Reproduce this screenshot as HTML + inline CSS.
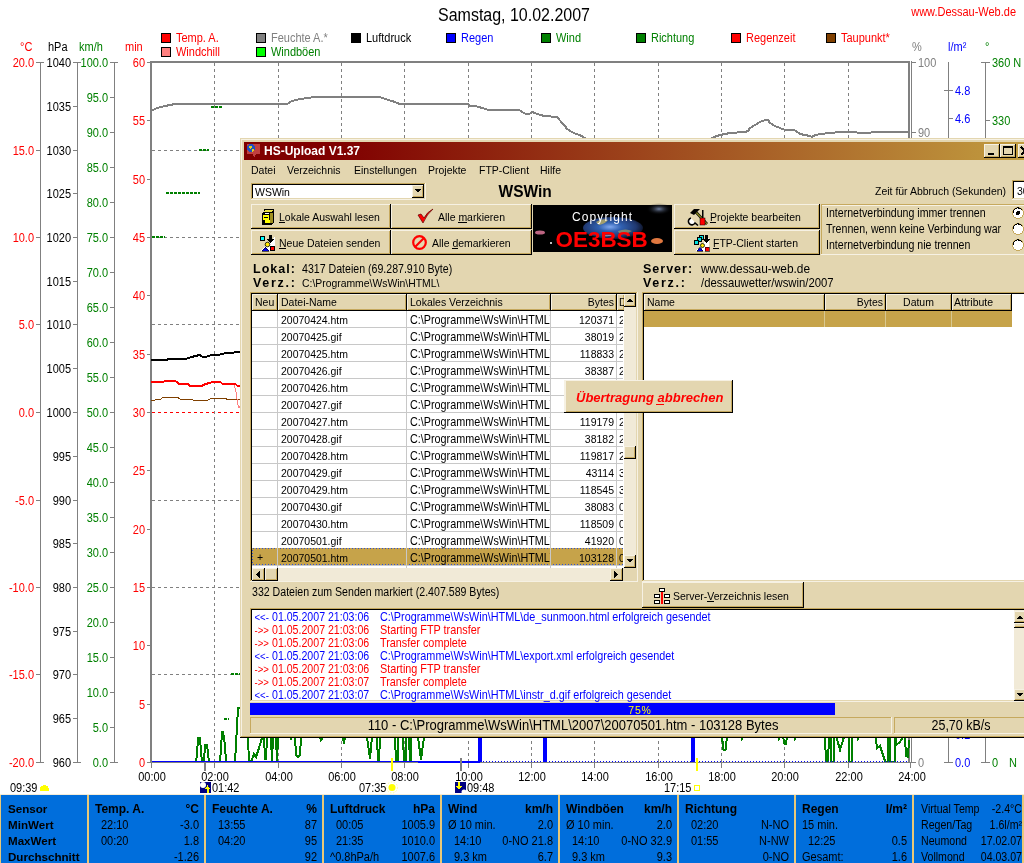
<!DOCTYPE html>
<html><head><meta charset="utf-8"><title>WsWin HS-Upload</title>
<style>html,body{margin:0;padding:0;background:#fff;overflow:hidden;width:1024px;height:863px}svg{display:block;will-change:transform}text{font-family:"Liberation Sans",sans-serif}</style>
</head><body>
<svg width="1024" height="863" viewBox="0 0 1024 863" font-family="Liberation Sans, sans-serif" shape-rendering="crispEdges">
<rect x="0" y="0" width="1024" height="863" fill="#FFFFFF"/>
<g><text transform="translate(514,21) scale(0.8929,1)" x="0" y="0" fill="#000" text-anchor="middle" font-size="17.92" font-weight="normal" >Samstag, 10.02.2007</text>
<text transform="translate(1016,16) scale(0.8929,1)" x="0" y="0" fill="#FF0000" text-anchor="end" font-size="12.32" font-weight="normal" >www.Dessau-Web.de</text>
<rect x="161.5" y="33.5" width="9" height="9" fill="#FF0000" stroke="#000" stroke-width="1"/>
<text transform="translate(176,42) scale(0.8929,1)" x="0" y="0" fill="#FF0000" text-anchor="start" font-size="12.32" font-weight="normal" >Temp. A.</text>
<rect x="256.5" y="33.5" width="9" height="9" fill="#808080" stroke="#000" stroke-width="1"/>
<text transform="translate(271,42) scale(0.8929,1)" x="0" y="0" fill="#808080" text-anchor="start" font-size="12.32" font-weight="normal" >Feuchte A.*</text>
<rect x="351.5" y="33.5" width="9" height="9" fill="#000000" stroke="#000" stroke-width="1"/>
<text transform="translate(366,42) scale(0.8929,1)" x="0" y="0" fill="#000000" text-anchor="start" font-size="12.32" font-weight="normal" >Luftdruck</text>
<rect x="446.5" y="33.5" width="9" height="9" fill="#0000FF" stroke="#000" stroke-width="1"/>
<text transform="translate(461,42) scale(0.8929,1)" x="0" y="0" fill="#0000FF" text-anchor="start" font-size="12.32" font-weight="normal" >Regen</text>
<rect x="541.5" y="33.5" width="9" height="9" fill="#008000" stroke="#000" stroke-width="1"/>
<text transform="translate(556,42) scale(0.8929,1)" x="0" y="0" fill="#008000" text-anchor="start" font-size="12.32" font-weight="normal" >Wind</text>
<rect x="636.5" y="33.5" width="9" height="9" fill="#008000" stroke="#000" stroke-width="1"/>
<text transform="translate(651,42) scale(0.8929,1)" x="0" y="0" fill="#008000" text-anchor="start" font-size="12.32" font-weight="normal" >Richtung</text>
<rect x="731.5" y="33.5" width="9" height="9" fill="#FF0000" stroke="#000" stroke-width="1"/>
<text transform="translate(746,42) scale(0.8929,1)" x="0" y="0" fill="#FF0000" text-anchor="start" font-size="12.32" font-weight="normal" >Regenzeit</text>
<rect x="826.5" y="33.5" width="9" height="9" fill="#804000" stroke="#000" stroke-width="1"/>
<text transform="translate(841,42) scale(0.8929,1)" x="0" y="0" fill="#FF0000" text-anchor="start" font-size="12.32" font-weight="normal" >Taupunkt*</text>
<rect x="161.5" y="47.5" width="9" height="9" fill="#FF8080" stroke="#000" stroke-width="1"/>
<text transform="translate(176,56) scale(0.8929,1)" x="0" y="0" fill="#FF0000" text-anchor="start" font-size="12.32" font-weight="normal" >Windchill</text>
<rect x="256.5" y="47.5" width="9" height="9" fill="#00FF00" stroke="#000" stroke-width="1"/>
<text transform="translate(271,56) scale(0.8929,1)" x="0" y="0" fill="#008000" text-anchor="start" font-size="12.32" font-weight="normal" >Windböen</text>
<text transform="translate(20,51) scale(0.8929,1)" x="0" y="0" fill="#FF0000" text-anchor="start" font-size="12.32" font-weight="normal" >°C</text>
<text transform="translate(48,51) scale(0.8929,1)" x="0" y="0" fill="#000" text-anchor="start" font-size="12.32" font-weight="normal" >hPa</text>
<text transform="translate(79,51) scale(0.8929,1)" x="0" y="0" fill="#008000" text-anchor="start" font-size="12.32" font-weight="normal" >km/h</text>
<text transform="translate(125,51) scale(0.8929,1)" x="0" y="0" fill="#FF0000" text-anchor="start" font-size="12.32" font-weight="normal" >min</text>
<text transform="translate(912,51) scale(0.8929,1)" x="0" y="0" fill="#808080" text-anchor="start" font-size="12.32" font-weight="normal" >%</text>
<text transform="translate(948,51) scale(0.8929,1)" x="0" y="0" fill="#0000FF" text-anchor="start" font-size="12.32" font-weight="normal" >l/m²</text>
<text transform="translate(985,51) scale(0.8929,1)" x="0" y="0" fill="#008000" text-anchor="start" font-size="12.32" font-weight="normal" >°</text>
<line x1="40.5" y1="62" x2="40.5" y2="763" stroke="#808080" stroke-width="1" />
<line x1="36" y1="62.5" x2="44" y2="62.5" stroke="#808080" stroke-width="1" />
<text transform="translate(34,67) scale(0.8929,1)" x="0" y="0" fill="#FF0000" text-anchor="end" font-size="12.32" font-weight="normal" >20.0</text>
<line x1="36" y1="150.5" x2="41" y2="150.5" stroke="#808080" stroke-width="1" />
<text transform="translate(34,155) scale(0.8929,1)" x="0" y="0" fill="#FF0000" text-anchor="end" font-size="12.32" font-weight="normal" >15.0</text>
<line x1="36" y1="237.5" x2="41" y2="237.5" stroke="#808080" stroke-width="1" />
<text transform="translate(34,242) scale(0.8929,1)" x="0" y="0" fill="#FF0000" text-anchor="end" font-size="12.32" font-weight="normal" >10.0</text>
<line x1="36" y1="324.5" x2="41" y2="324.5" stroke="#808080" stroke-width="1" />
<text transform="translate(34,329) scale(0.8929,1)" x="0" y="0" fill="#FF0000" text-anchor="end" font-size="12.32" font-weight="normal" >5.0</text>
<line x1="36" y1="412.5" x2="41" y2="412.5" stroke="#808080" stroke-width="1" />
<text transform="translate(34,417) scale(0.8929,1)" x="0" y="0" fill="#FF0000" text-anchor="end" font-size="12.32" font-weight="normal" >0.0</text>
<line x1="36" y1="500.5" x2="41" y2="500.5" stroke="#808080" stroke-width="1" />
<text transform="translate(34,505) scale(0.8929,1)" x="0" y="0" fill="#FF0000" text-anchor="end" font-size="12.32" font-weight="normal" >-5.0</text>
<line x1="36" y1="587.5" x2="41" y2="587.5" stroke="#808080" stroke-width="1" />
<text transform="translate(34,592) scale(0.8929,1)" x="0" y="0" fill="#FF0000" text-anchor="end" font-size="12.32" font-weight="normal" >-10.0</text>
<line x1="36" y1="674.5" x2="41" y2="674.5" stroke="#808080" stroke-width="1" />
<text transform="translate(34,679) scale(0.8929,1)" x="0" y="0" fill="#FF0000" text-anchor="end" font-size="12.32" font-weight="normal" >-15.0</text>
<line x1="36" y1="762.5" x2="44" y2="762.5" stroke="#808080" stroke-width="1" />
<text transform="translate(34,767) scale(0.8929,1)" x="0" y="0" fill="#FF0000" text-anchor="end" font-size="12.32" font-weight="normal" >-20.0</text>
<line x1="77.5" y1="62" x2="77.5" y2="763" stroke="#808080" stroke-width="1" />
<line x1="73" y1="62.5" x2="81" y2="62.5" stroke="#808080" stroke-width="1" />
<text transform="translate(71,67) scale(0.8929,1)" x="0" y="0" fill="#000000" text-anchor="end" font-size="12.32" font-weight="normal" >1040</text>
<line x1="73" y1="106.5" x2="78" y2="106.5" stroke="#808080" stroke-width="1" />
<text transform="translate(71,111) scale(0.8929,1)" x="0" y="0" fill="#000000" text-anchor="end" font-size="12.32" font-weight="normal" >1035</text>
<line x1="73" y1="150.5" x2="78" y2="150.5" stroke="#808080" stroke-width="1" />
<text transform="translate(71,155) scale(0.8929,1)" x="0" y="0" fill="#000000" text-anchor="end" font-size="12.32" font-weight="normal" >1030</text>
<line x1="73" y1="193.5" x2="78" y2="193.5" stroke="#808080" stroke-width="1" />
<text transform="translate(71,198) scale(0.8929,1)" x="0" y="0" fill="#000000" text-anchor="end" font-size="12.32" font-weight="normal" >1025</text>
<line x1="73" y1="237.5" x2="78" y2="237.5" stroke="#808080" stroke-width="1" />
<text transform="translate(71,242) scale(0.8929,1)" x="0" y="0" fill="#000000" text-anchor="end" font-size="12.32" font-weight="normal" >1020</text>
<line x1="73" y1="281.5" x2="78" y2="281.5" stroke="#808080" stroke-width="1" />
<text transform="translate(71,286) scale(0.8929,1)" x="0" y="0" fill="#000000" text-anchor="end" font-size="12.32" font-weight="normal" >1015</text>
<line x1="73" y1="324.5" x2="78" y2="324.5" stroke="#808080" stroke-width="1" />
<text transform="translate(71,329) scale(0.8929,1)" x="0" y="0" fill="#000000" text-anchor="end" font-size="12.32" font-weight="normal" >1010</text>
<line x1="73" y1="368.5" x2="78" y2="368.5" stroke="#808080" stroke-width="1" />
<text transform="translate(71,373) scale(0.8929,1)" x="0" y="0" fill="#000000" text-anchor="end" font-size="12.32" font-weight="normal" >1005</text>
<line x1="73" y1="412.5" x2="78" y2="412.5" stroke="#808080" stroke-width="1" />
<text transform="translate(71,417) scale(0.8929,1)" x="0" y="0" fill="#000000" text-anchor="end" font-size="12.32" font-weight="normal" >1000</text>
<line x1="73" y1="456.5" x2="78" y2="456.5" stroke="#808080" stroke-width="1" />
<text transform="translate(71,461) scale(0.8929,1)" x="0" y="0" fill="#000000" text-anchor="end" font-size="12.32" font-weight="normal" >995</text>
<line x1="73" y1="500.5" x2="78" y2="500.5" stroke="#808080" stroke-width="1" />
<text transform="translate(71,505) scale(0.8929,1)" x="0" y="0" fill="#000000" text-anchor="end" font-size="12.32" font-weight="normal" >990</text>
<line x1="73" y1="543.5" x2="78" y2="543.5" stroke="#808080" stroke-width="1" />
<text transform="translate(71,548) scale(0.8929,1)" x="0" y="0" fill="#000000" text-anchor="end" font-size="12.32" font-weight="normal" >985</text>
<line x1="73" y1="587.5" x2="78" y2="587.5" stroke="#808080" stroke-width="1" />
<text transform="translate(71,592) scale(0.8929,1)" x="0" y="0" fill="#000000" text-anchor="end" font-size="12.32" font-weight="normal" >980</text>
<line x1="73" y1="631.5" x2="78" y2="631.5" stroke="#808080" stroke-width="1" />
<text transform="translate(71,636) scale(0.8929,1)" x="0" y="0" fill="#000000" text-anchor="end" font-size="12.32" font-weight="normal" >975</text>
<line x1="73" y1="674.5" x2="78" y2="674.5" stroke="#808080" stroke-width="1" />
<text transform="translate(71,679) scale(0.8929,1)" x="0" y="0" fill="#000000" text-anchor="end" font-size="12.32" font-weight="normal" >970</text>
<line x1="73" y1="718.5" x2="78" y2="718.5" stroke="#808080" stroke-width="1" />
<text transform="translate(71,723) scale(0.8929,1)" x="0" y="0" fill="#000000" text-anchor="end" font-size="12.32" font-weight="normal" >965</text>
<line x1="73" y1="762.5" x2="81" y2="762.5" stroke="#808080" stroke-width="1" />
<text transform="translate(71,767) scale(0.8929,1)" x="0" y="0" fill="#000000" text-anchor="end" font-size="12.32" font-weight="normal" >960</text>
<line x1="114.5" y1="62" x2="114.5" y2="763" stroke="#808080" stroke-width="1" />
<line x1="110" y1="62.5" x2="118" y2="62.5" stroke="#808080" stroke-width="1" />
<text transform="translate(108,67) scale(0.8929,1)" x="0" y="0" fill="#008000" text-anchor="end" font-size="12.32" font-weight="normal" >100.0</text>
<line x1="110" y1="97.5" x2="115" y2="97.5" stroke="#808080" stroke-width="1" />
<text transform="translate(108,102) scale(0.8929,1)" x="0" y="0" fill="#008000" text-anchor="end" font-size="12.32" font-weight="normal" >95.0</text>
<line x1="110" y1="132.5" x2="115" y2="132.5" stroke="#808080" stroke-width="1" />
<text transform="translate(108,137) scale(0.8929,1)" x="0" y="0" fill="#008000" text-anchor="end" font-size="12.32" font-weight="normal" >90.0</text>
<line x1="110" y1="167.5" x2="115" y2="167.5" stroke="#808080" stroke-width="1" />
<text transform="translate(108,172) scale(0.8929,1)" x="0" y="0" fill="#008000" text-anchor="end" font-size="12.32" font-weight="normal" >85.0</text>
<line x1="110" y1="202.5" x2="115" y2="202.5" stroke="#808080" stroke-width="1" />
<text transform="translate(108,207) scale(0.8929,1)" x="0" y="0" fill="#008000" text-anchor="end" font-size="12.32" font-weight="normal" >80.0</text>
<line x1="110" y1="237.5" x2="115" y2="237.5" stroke="#808080" stroke-width="1" />
<text transform="translate(108,242) scale(0.8929,1)" x="0" y="0" fill="#008000" text-anchor="end" font-size="12.32" font-weight="normal" >75.0</text>
<line x1="110" y1="272.5" x2="115" y2="272.5" stroke="#808080" stroke-width="1" />
<text transform="translate(108,277) scale(0.8929,1)" x="0" y="0" fill="#008000" text-anchor="end" font-size="12.32" font-weight="normal" >70.0</text>
<line x1="110" y1="307.5" x2="115" y2="307.5" stroke="#808080" stroke-width="1" />
<text transform="translate(108,312) scale(0.8929,1)" x="0" y="0" fill="#008000" text-anchor="end" font-size="12.32" font-weight="normal" >65.0</text>
<line x1="110" y1="342.5" x2="115" y2="342.5" stroke="#808080" stroke-width="1" />
<text transform="translate(108,347) scale(0.8929,1)" x="0" y="0" fill="#008000" text-anchor="end" font-size="12.32" font-weight="normal" >60.0</text>
<line x1="110" y1="377.5" x2="115" y2="377.5" stroke="#808080" stroke-width="1" />
<text transform="translate(108,382) scale(0.8929,1)" x="0" y="0" fill="#008000" text-anchor="end" font-size="12.32" font-weight="normal" >55.0</text>
<line x1="110" y1="412.5" x2="115" y2="412.5" stroke="#808080" stroke-width="1" />
<text transform="translate(108,417) scale(0.8929,1)" x="0" y="0" fill="#008000" text-anchor="end" font-size="12.32" font-weight="normal" >50.0</text>
<line x1="110" y1="447.5" x2="115" y2="447.5" stroke="#808080" stroke-width="1" />
<text transform="translate(108,452) scale(0.8929,1)" x="0" y="0" fill="#008000" text-anchor="end" font-size="12.32" font-weight="normal" >45.0</text>
<line x1="110" y1="482.5" x2="115" y2="482.5" stroke="#808080" stroke-width="1" />
<text transform="translate(108,487) scale(0.8929,1)" x="0" y="0" fill="#008000" text-anchor="end" font-size="12.32" font-weight="normal" >40.0</text>
<line x1="110" y1="517.5" x2="115" y2="517.5" stroke="#808080" stroke-width="1" />
<text transform="translate(108,522) scale(0.8929,1)" x="0" y="0" fill="#008000" text-anchor="end" font-size="12.32" font-weight="normal" >35.0</text>
<line x1="110" y1="552.5" x2="115" y2="552.5" stroke="#808080" stroke-width="1" />
<text transform="translate(108,557) scale(0.8929,1)" x="0" y="0" fill="#008000" text-anchor="end" font-size="12.32" font-weight="normal" >30.0</text>
<line x1="110" y1="587.5" x2="115" y2="587.5" stroke="#808080" stroke-width="1" />
<text transform="translate(108,592) scale(0.8929,1)" x="0" y="0" fill="#008000" text-anchor="end" font-size="12.32" font-weight="normal" >25.0</text>
<line x1="110" y1="622.5" x2="115" y2="622.5" stroke="#808080" stroke-width="1" />
<text transform="translate(108,627) scale(0.8929,1)" x="0" y="0" fill="#008000" text-anchor="end" font-size="12.32" font-weight="normal" >20.0</text>
<line x1="110" y1="657.5" x2="115" y2="657.5" stroke="#808080" stroke-width="1" />
<text transform="translate(108,662) scale(0.8929,1)" x="0" y="0" fill="#008000" text-anchor="end" font-size="12.32" font-weight="normal" >15.0</text>
<line x1="110" y1="692.5" x2="115" y2="692.5" stroke="#808080" stroke-width="1" />
<text transform="translate(108,697) scale(0.8929,1)" x="0" y="0" fill="#008000" text-anchor="end" font-size="12.32" font-weight="normal" >10.0</text>
<line x1="110" y1="727.5" x2="115" y2="727.5" stroke="#808080" stroke-width="1" />
<text transform="translate(108,732) scale(0.8929,1)" x="0" y="0" fill="#008000" text-anchor="end" font-size="12.32" font-weight="normal" >5.0</text>
<line x1="110" y1="762.5" x2="118" y2="762.5" stroke="#808080" stroke-width="1" />
<text transform="translate(108,767) scale(0.8929,1)" x="0" y="0" fill="#008000" text-anchor="end" font-size="12.32" font-weight="normal" >0.0</text>
<line x1="147" y1="62.5" x2="151" y2="62.5" stroke="#808080" stroke-width="1" />
<text transform="translate(145,67) scale(0.8929,1)" x="0" y="0" fill="#FF0000" text-anchor="end" font-size="12.32" font-weight="normal" >60</text>
<line x1="147" y1="120.5" x2="151" y2="120.5" stroke="#808080" stroke-width="1" />
<text transform="translate(145,125) scale(0.8929,1)" x="0" y="0" fill="#FF0000" text-anchor="end" font-size="12.32" font-weight="normal" >55</text>
<line x1="147" y1="179.5" x2="151" y2="179.5" stroke="#808080" stroke-width="1" />
<text transform="translate(145,184) scale(0.8929,1)" x="0" y="0" fill="#FF0000" text-anchor="end" font-size="12.32" font-weight="normal" >50</text>
<line x1="147" y1="237.5" x2="151" y2="237.5" stroke="#808080" stroke-width="1" />
<text transform="translate(145,242) scale(0.8929,1)" x="0" y="0" fill="#FF0000" text-anchor="end" font-size="12.32" font-weight="normal" >45</text>
<line x1="147" y1="295.5" x2="151" y2="295.5" stroke="#808080" stroke-width="1" />
<text transform="translate(145,300) scale(0.8929,1)" x="0" y="0" fill="#FF0000" text-anchor="end" font-size="12.32" font-weight="normal" >40</text>
<line x1="147" y1="354.5" x2="151" y2="354.5" stroke="#808080" stroke-width="1" />
<text transform="translate(145,359) scale(0.8929,1)" x="0" y="0" fill="#FF0000" text-anchor="end" font-size="12.32" font-weight="normal" >35</text>
<line x1="147" y1="412.5" x2="151" y2="412.5" stroke="#808080" stroke-width="1" />
<text transform="translate(145,417) scale(0.8929,1)" x="0" y="0" fill="#FF0000" text-anchor="end" font-size="12.32" font-weight="normal" >30</text>
<line x1="147" y1="470.5" x2="151" y2="470.5" stroke="#808080" stroke-width="1" />
<text transform="translate(145,475) scale(0.8929,1)" x="0" y="0" fill="#FF0000" text-anchor="end" font-size="12.32" font-weight="normal" >25</text>
<line x1="147" y1="529.5" x2="151" y2="529.5" stroke="#808080" stroke-width="1" />
<text transform="translate(145,534) scale(0.8929,1)" x="0" y="0" fill="#FF0000" text-anchor="end" font-size="12.32" font-weight="normal" >20</text>
<line x1="147" y1="587.5" x2="151" y2="587.5" stroke="#808080" stroke-width="1" />
<text transform="translate(145,592) scale(0.8929,1)" x="0" y="0" fill="#FF0000" text-anchor="end" font-size="12.32" font-weight="normal" >15</text>
<line x1="147" y1="645.5" x2="151" y2="645.5" stroke="#808080" stroke-width="1" />
<text transform="translate(145,650) scale(0.8929,1)" x="0" y="0" fill="#FF0000" text-anchor="end" font-size="12.32" font-weight="normal" >10</text>
<line x1="147" y1="704.5" x2="151" y2="704.5" stroke="#808080" stroke-width="1" />
<text transform="translate(145,709) scale(0.8929,1)" x="0" y="0" fill="#FF0000" text-anchor="end" font-size="12.32" font-weight="normal" >5</text>
<line x1="147" y1="762.5" x2="151" y2="762.5" stroke="#808080" stroke-width="1" />
<text transform="translate(145,767) scale(0.8929,1)" x="0" y="0" fill="#FF0000" text-anchor="end" font-size="12.32" font-weight="normal" >0</text>
<line x1="152" y1="150.5" x2="909" y2="150.5" stroke="#808080" stroke-width="1" stroke-dasharray="3,3"/>
<line x1="152" y1="237.5" x2="909" y2="237.5" stroke="#808080" stroke-width="1" stroke-dasharray="3,3"/>
<line x1="152" y1="324.5" x2="909" y2="324.5" stroke="#808080" stroke-width="1" stroke-dasharray="3,3"/>
<line x1="152" y1="412.5" x2="909" y2="412.5" stroke="#FF0000" stroke-width="1" stroke-dasharray="3,3"/>
<line x1="152" y1="500.5" x2="909" y2="500.5" stroke="#808080" stroke-width="1" stroke-dasharray="3,3"/>
<line x1="152" y1="587.5" x2="909" y2="587.5" stroke="#808080" stroke-width="1" stroke-dasharray="3,3"/>
<line x1="152" y1="674.5" x2="909" y2="674.5" stroke="#808080" stroke-width="1" stroke-dasharray="3,3"/>
<line x1="214.5" y1="63" x2="214.5" y2="762" stroke="#808080" stroke-width="1" stroke-dasharray="3,3"/>
<line x1="214.5" y1="762" x2="214.5" y2="768" stroke="#808080" stroke-width="1" />
<line x1="278.5" y1="63" x2="278.5" y2="762" stroke="#808080" stroke-width="1" stroke-dasharray="3,3"/>
<line x1="278.5" y1="762" x2="278.5" y2="768" stroke="#808080" stroke-width="1" />
<line x1="341.5" y1="63" x2="341.5" y2="762" stroke="#808080" stroke-width="1" stroke-dasharray="3,3"/>
<line x1="341.5" y1="762" x2="341.5" y2="768" stroke="#808080" stroke-width="1" />
<line x1="404.5" y1="63" x2="404.5" y2="762" stroke="#808080" stroke-width="1" stroke-dasharray="3,3"/>
<line x1="404.5" y1="762" x2="404.5" y2="768" stroke="#808080" stroke-width="1" />
<line x1="468.5" y1="63" x2="468.5" y2="762" stroke="#808080" stroke-width="1" stroke-dasharray="3,3"/>
<line x1="468.5" y1="762" x2="468.5" y2="768" stroke="#808080" stroke-width="1" />
<line x1="531.5" y1="63" x2="531.5" y2="762" stroke="#808080" stroke-width="1" stroke-dasharray="3,3"/>
<line x1="531.5" y1="762" x2="531.5" y2="768" stroke="#808080" stroke-width="1" />
<line x1="594.5" y1="63" x2="594.5" y2="762" stroke="#808080" stroke-width="1" stroke-dasharray="3,3"/>
<line x1="594.5" y1="762" x2="594.5" y2="768" stroke="#808080" stroke-width="1" />
<line x1="658.5" y1="63" x2="658.5" y2="762" stroke="#808080" stroke-width="1" stroke-dasharray="3,3"/>
<line x1="658.5" y1="762" x2="658.5" y2="768" stroke="#808080" stroke-width="1" />
<line x1="721.5" y1="63" x2="721.5" y2="762" stroke="#808080" stroke-width="1" stroke-dasharray="3,3"/>
<line x1="721.5" y1="762" x2="721.5" y2="768" stroke="#808080" stroke-width="1" />
<line x1="784.5" y1="63" x2="784.5" y2="762" stroke="#808080" stroke-width="1" stroke-dasharray="3,3"/>
<line x1="784.5" y1="762" x2="784.5" y2="768" stroke="#808080" stroke-width="1" />
<line x1="848.5" y1="63" x2="848.5" y2="762" stroke="#808080" stroke-width="1" stroke-dasharray="3,3"/>
<line x1="848.5" y1="762" x2="848.5" y2="768" stroke="#808080" stroke-width="1" />
<line x1="151.5" y1="762" x2="151.5" y2="768" stroke="#808080" stroke-width="1" />
<line x1="910.5" y1="762" x2="910.5" y2="768" stroke="#808080" stroke-width="1" />
<rect x="150" y="61" width="2" height="702" fill="#808080"/>
<rect x="150" y="61" width="760" height="2" fill="#808080"/>
<rect x="908" y="61" width="2" height="702" fill="#808080"/>
<rect x="911" y="61" width="1" height="702" fill="#808080"/>
<text transform="translate(152,781) scale(0.8929,1)" x="0" y="0" fill="#000" text-anchor="middle" font-size="12.32" font-weight="normal" >00:00</text>
<text transform="translate(215,781) scale(0.8929,1)" x="0" y="0" fill="#000" text-anchor="middle" font-size="12.32" font-weight="normal" >02:00</text>
<text transform="translate(279,781) scale(0.8929,1)" x="0" y="0" fill="#000" text-anchor="middle" font-size="12.32" font-weight="normal" >04:00</text>
<text transform="translate(342,781) scale(0.8929,1)" x="0" y="0" fill="#000" text-anchor="middle" font-size="12.32" font-weight="normal" >06:00</text>
<text transform="translate(405,781) scale(0.8929,1)" x="0" y="0" fill="#000" text-anchor="middle" font-size="12.32" font-weight="normal" >08:00</text>
<text transform="translate(469,781) scale(0.8929,1)" x="0" y="0" fill="#000" text-anchor="middle" font-size="12.32" font-weight="normal" >10:00</text>
<text transform="translate(532,781) scale(0.8929,1)" x="0" y="0" fill="#000" text-anchor="middle" font-size="12.32" font-weight="normal" >12:00</text>
<text transform="translate(595,781) scale(0.8929,1)" x="0" y="0" fill="#000" text-anchor="middle" font-size="12.32" font-weight="normal" >14:00</text>
<text transform="translate(659,781) scale(0.8929,1)" x="0" y="0" fill="#000" text-anchor="middle" font-size="12.32" font-weight="normal" >16:00</text>
<text transform="translate(722,781) scale(0.8929,1)" x="0" y="0" fill="#000" text-anchor="middle" font-size="12.32" font-weight="normal" >18:00</text>
<text transform="translate(785,781) scale(0.8929,1)" x="0" y="0" fill="#000" text-anchor="middle" font-size="12.32" font-weight="normal" >20:00</text>
<text transform="translate(849,781) scale(0.8929,1)" x="0" y="0" fill="#000" text-anchor="middle" font-size="12.32" font-weight="normal" >22:00</text>
<text transform="translate(912,781) scale(0.8929,1)" x="0" y="0" fill="#000" text-anchor="middle" font-size="12.32" font-weight="normal" >24:00</text>
<line x1="912" y1="62.5" x2="916" y2="62.5" stroke="#808080" stroke-width="1" />
<text transform="translate(918,67) scale(0.8929,1)" x="0" y="0" fill="#808080" text-anchor="start" font-size="12.32" font-weight="normal" >100</text>
<line x1="912" y1="132.5" x2="916" y2="132.5" stroke="#808080" stroke-width="1" />
<text transform="translate(918,137) scale(0.8929,1)" x="0" y="0" fill="#808080" text-anchor="start" font-size="12.32" font-weight="normal" >90</text>
<line x1="912" y1="762.5" x2="916" y2="762.5" stroke="#808080" stroke-width="1" />
<text transform="translate(918,767) scale(0.8929,1)" x="0" y="0" fill="#808080" text-anchor="start" font-size="12.32" font-weight="normal" >0</text>
<line x1="948.5" y1="62" x2="948.5" y2="762" stroke="#808080" stroke-width="1" />
<line x1="944" y1="90.5" x2="953" y2="90.5" stroke="#808080" stroke-width="1" />
<text transform="translate(955,95) scale(0.8929,1)" x="0" y="0" fill="#0000FF" text-anchor="start" font-size="12.32" font-weight="normal" >4.8</text>
<line x1="948" y1="118.5" x2="953" y2="118.5" stroke="#808080" stroke-width="1" />
<text transform="translate(955,123) scale(0.8929,1)" x="0" y="0" fill="#0000FF" text-anchor="start" font-size="12.32" font-weight="normal" >4.6</text>
<line x1="944" y1="734.5" x2="953" y2="734.5" stroke="#808080" stroke-width="1" />
<text transform="translate(955,739) scale(0.8929,1)" x="0" y="0" fill="#0000FF" text-anchor="start" font-size="12.32" font-weight="normal" >0.2</text>
<line x1="944" y1="762.5" x2="953" y2="762.5" stroke="#808080" stroke-width="1" />
<text transform="translate(955,767) scale(0.8929,1)" x="0" y="0" fill="#0000FF" text-anchor="start" font-size="12.32" font-weight="normal" >0.0</text>
<line x1="985.5" y1="62" x2="985.5" y2="762" stroke="#808080" stroke-width="1" />
<line x1="981" y1="62.5" x2="990" y2="62.5" stroke="#808080" stroke-width="1" />
<text transform="translate(992,67) scale(0.8929,1)" x="0" y="0" fill="#008000" text-anchor="start" font-size="12.32" font-weight="normal" >360 N</text>
<line x1="985" y1="120.5" x2="990" y2="120.5" stroke="#808080" stroke-width="1" />
<text transform="translate(992,125) scale(0.8929,1)" x="0" y="0" fill="#008000" text-anchor="start" font-size="12.32" font-weight="normal" >330</text>
<line x1="981" y1="762.5" x2="990" y2="762.5" stroke="#808080" stroke-width="1" />
<text transform="translate(992,767) scale(0.8929,1)" x="0" y="0" fill="#008000" text-anchor="start" font-size="12.32" font-weight="normal" >0</text>
<text transform="translate(1009,767) scale(0.8929,1)" x="0" y="0" fill="#008000" text-anchor="start" font-size="12.32" font-weight="normal" >N</text></g>
<g shape-rendering="crispEdges"><polyline points="151,111 157,108 165,106 175,104 185,104 287,104 292,101 300,99 315,97 380,97 385,99 392,101 400,104 468,104 470,106 477,106.5 482,108 487,109.5 497,110 520,110.5 522,112 525,113.5 530,113.5 532,112 535,113 540,115 545,116 557,117 558,118 562,123 565,126 567,129 572,132 576,134 580,135 586,139" fill="none" stroke="#808080" stroke-width="2" stroke-linejoin="miter" />
<polyline points="708,141 714,137 720,135 730,133 745,132 748,131 750,128 755,125 760,122 765,120 766,119.5 768,120 770,123 775,126 780,128 785,130 795,130.5 796,131 800,134 805,135 810,136 812,137 815,135 825,133.5 835,132.5 855,131.5 858,133 862,133.5 875,132 885,131.5 908,131.5" fill="none" stroke="#808080" stroke-width="2" stroke-linejoin="miter" />
<polyline points="151,360 167,360 168,359 185,359 192,357 195,356 200,355 202,356.5 207,356.5 210,355.5 218,355 224,353.5 228,352.5 234,352.5 242,352" fill="none" stroke="#000000" stroke-width="2" stroke-linejoin="miter" />
<polyline points="151,400.5 160,399.5 163,397.5 178,397.5 180,399 190,399 195,400.5 207,400.5 210,399 217,398.5 225,398.5 228,399.5 242,399.5" fill="none" stroke="#804000" stroke-width="1" stroke-linejoin="miter" />
<polyline points="234,384 236,392 238,405 239,408 241,405" fill="none" stroke="#FF8080" stroke-width="1" stroke-linejoin="miter" />
<polyline points="151,382 163,382 166,380.5 173,380.5 177,382 179,384 188,384 190,386 202,386 205,384 210,383 214,381.5 220,381.5 222,383.5 235,383.5 237,385.5 242,385.5" fill="none" stroke="#FF0000" stroke-width="2" stroke-linejoin="miter" />
<line x1="211" y1="107" x2="222" y2="107" stroke="#008000" stroke-width="2" stroke-dasharray="3,1"/>
<line x1="199" y1="150" x2="209" y2="150" stroke="#008000" stroke-width="2" stroke-dasharray="3,1"/>
<line x1="166" y1="193" x2="200" y2="193" stroke="#008000" stroke-width="2" stroke-dasharray="3,1"/>
<line x1="152" y1="237" x2="165" y2="237" stroke="#008000" stroke-width="2" stroke-dasharray="3,1"/>
<line x1="231" y1="674" x2="240" y2="674" stroke="#008000" stroke-width="2" stroke-dasharray="3,1"/>
<line x1="224" y1="719" x2="229" y2="719" stroke="#008000" stroke-width="2" stroke-dasharray="3,1"/>
<polyline points="152,762 196,762 197,754 198,738 200,738 201,751 202,762 204,762 205,745 207,745 209,762 220,762 221,748 222,732 223,732 225,745 226,762 235,762 236,744 237,727 238,708 241,708 247,737 248,738 249,762 251,762 254,754 256,757 259,748 262,738 264,737 265,759 266,759 267,737 271,737 272,762 273,737 276,737 277,762 278,737 290,737 291,739 292,737 295,737 296,755 298,757 300,755 301,737 320,737 321,740 323,737 343,737 344,744 345,737 367,737 370,759 372,737 377,737 378,762 379,762 380,737 395,737 396,762 398,762 398,737 403,737 404,762 406,762 406,737 409,737 410,762 411,762 411,737 418,737 421,760 424,737 427,737" fill="none" stroke="#008000" stroke-width="2" stroke-linejoin="miter" />
<polyline points="720,737 722,737 723.5,750 725.5,750 727,737 742,737 742,738.5 743,737 779,737 779,738.5 780,737 783,737 784.5,744 786,744 787,737 795,737 795,738.5 796,737 825,737 826,762 828,762 829,737 830.5,737 831.5,762 833.5,762 834,737 836.5,737 840,750 844,737 848.5,737 849.5,762 851.5,762 852,737 858,737 858,738.5 859,737 875.5,737 877,748 880,746 885,761 887.5,762 888.5,737 889.5,737 889.5,762 895,762 895.5,737 896,745 900,742 903,737 905,737 906,756 908,757 909,740" fill="none" stroke="#008000" stroke-width="2" stroke-linejoin="miter" />
<rect x="152" y="762" width="757" height="1" fill="#808080"/>
<rect x="152" y="761" width="328" height="1" fill="#0000FF"/>
<rect x="418" y="762" width="62" height="1" fill="#0000FF"/>
<line x1="483" y1="761.5" x2="909" y2="761.5" stroke="#0000FF" stroke-width="1" stroke-dasharray="1,2"/>
<rect x="478" y="737" width="4" height="25" fill="#0000FF"/>
<rect x="543" y="737" width="4" height="25" fill="#0000FF"/>
<rect x="691" y="737" width="4" height="25" fill="#0000FF"/>
<rect x="204" y="763" width="2" height="8" fill="#808080"/>
<rect x="391" y="758" width="2" height="13" fill="#FFFF00"/>
<rect x="460" y="758" width="2" height="13" fill="#808080"/>
<rect x="696" y="758" width="2" height="13" fill="#FFFF00"/>
<text transform="translate(10,792) scale(0.8929,1)" x="0" y="0" fill="#000" text-anchor="start" font-size="12.32" font-weight="normal" >09:39</text>
<path d="M40,791 v-1.5 a4.5,4.5 0 0 1 9,0 v1.5 Z" fill="#FFFF00"/>
<rect x="200" y="782" width="11" height="11" fill="#000080"/>
<circle cx="203" cy="785" r="3" fill="#fff" shape-rendering="auto"/>
<path d="M207.5,785 L210,789 L208.5,789 L208.5,793 L206.5,793 L206.5,789 L205,789 Z" fill="#FFFF00"/>
<text transform="translate(212,792) scale(0.8929,1)" x="0" y="0" fill="#000" text-anchor="start" font-size="12.32" font-weight="normal" >01:42</text>
<text transform="translate(359,792) scale(0.8929,1)" x="0" y="0" fill="#000" text-anchor="start" font-size="12.32" font-weight="normal" >07:35</text>
<circle cx="392" cy="787.5" r="3.5" fill="#FFFF00" shape-rendering="auto"/>
<circle cx="392" cy="787.5" r="5.5" fill="none" stroke="#FFFF90" stroke-width="1" stroke-dasharray="1.5,1.5" shape-rendering="auto"/>
<rect x="455" y="782" width="11" height="11" fill="#000080"/>
<path d="M458,782 L460,782 L460,786 L462,786 L459,790 L456,786 L458,786 Z" fill="#FFFF00"/>
<circle cx="464" cy="792" r="2.5" fill="#fff" shape-rendering="auto"/>
<text transform="translate(467,792) scale(0.8929,1)" x="0" y="0" fill="#000" text-anchor="start" font-size="12.32" font-weight="normal" >09:48</text>
<text transform="translate(664,792) scale(0.8929,1)" x="0" y="0" fill="#000" text-anchor="start" font-size="12.32" font-weight="normal" >17:15</text>
<rect x="694.5" y="785.5" width="5" height="5" fill="none" stroke="#FFFF00" stroke-width="1"/></g>
<g><rect x="240" y="138" width="800" height="600" fill="#E3D6B0" />
<rect x="240" y="138" width="800" height="1" fill="#E3D6B0" />
<rect x="240" y="138" width="1" height="600" fill="#E3D6B0" />
<rect x="241" y="139" width="799" height="1" fill="#F6F1E3" />
<rect x="241" y="139" width="1" height="598" fill="#F6F1E3" />
<rect x="240" y="737" width="800" height="1" fill="#000000" />
<rect x="241" y="736" width="799" height="1" fill="#C6A95E" />
<defs><linearGradient id="tg" x1="0" x2="1" y1="0" y2="0"><stop offset="0" stop-color="#800000"/><stop offset="0.12" stop-color="#800000"/><stop offset="1" stop-color="#C29E40"/></linearGradient></defs>
<rect x="244" y="142" width="788" height="18" fill="url(#tg)"/>
<path d="M247,144 h13 v10 h-4 l-2,4 l-1,-4 h-6 Z" fill="#C04040"/>
<circle cx="251" cy="148" r="4" fill="#2050C0"/>
<path d="M249,146 q2,-1 3,1 q-1,2 -2,3 Z M252,149 q2,0 2,2 l-2,1 Z" fill="#E0D020"/>
<text x="264" y="155" fill="#FFFFFF" text-anchor="start" font-size="12" font-weight="bold" >HS-Upload V1.37</text>
<rect x="984" y="144" width="16" height="14" fill="#E3D6B0" /><rect x="984" y="144" width="16" height="1" fill="#F6F1E3" /><rect x="984" y="144" width="1" height="14" fill="#F6F1E3" /><rect x="984" y="157" width="16" height="1" fill="#000000" /><rect x="999" y="144" width="1" height="14" fill="#000000" /><rect x="985" y="156" width="14" height="1" fill="#C6A95E" /><rect x="998" y="145" width="1" height="12" fill="#C6A95E" />
<rect x="1000" y="144" width="16" height="14" fill="#E3D6B0" /><rect x="1000" y="144" width="16" height="1" fill="#F6F1E3" /><rect x="1000" y="144" width="1" height="14" fill="#F6F1E3" /><rect x="1000" y="157" width="16" height="1" fill="#000000" /><rect x="1015" y="144" width="1" height="14" fill="#000000" /><rect x="1001" y="156" width="14" height="1" fill="#C6A95E" /><rect x="1014" y="145" width="1" height="12" fill="#C6A95E" />
<rect x="1018" y="144" width="16" height="14" fill="#E3D6B0" /><rect x="1018" y="144" width="16" height="1" fill="#F6F1E3" /><rect x="1018" y="144" width="1" height="14" fill="#F6F1E3" /><rect x="1018" y="157" width="16" height="1" fill="#000000" /><rect x="1033" y="144" width="1" height="14" fill="#000000" /><rect x="1019" y="156" width="14" height="1" fill="#C6A95E" /><rect x="1032" y="145" width="1" height="12" fill="#C6A95E" />
<rect x="988" y="153" width="6" height="2" fill="#000" />
<rect x="1003.5" y="146.5" width="9" height="8" fill="none" stroke="#000" stroke-width="1"/>
<rect x="1004" y="147" width="8" height="1" fill="#000" />
<path d="M1021,147 l3,3 l3,-3 M1021,155 l3,-3 l3,3" stroke="#000" stroke-width="1.5" fill="none"/>
<text transform="translate(251,174) scale(0.8929,1)" x="0" y="0" fill="#000" text-anchor="start" font-size="11.76" font-weight="normal" >Datei</text>
<text transform="translate(287,174) scale(0.8929,1)" x="0" y="0" fill="#000" text-anchor="start" font-size="11.76" font-weight="normal" >Verzeichnis</text>
<text transform="translate(354,174) scale(0.8929,1)" x="0" y="0" fill="#000" text-anchor="start" font-size="11.76" font-weight="normal" >Einstellungen</text>
<text transform="translate(428,174) scale(0.8929,1)" x="0" y="0" fill="#000" text-anchor="start" font-size="11.76" font-weight="normal" >Projekte</text>
<text transform="translate(479,174) scale(0.8929,1)" x="0" y="0" fill="#000" text-anchor="start" font-size="11.76" font-weight="normal" >FTP-Client</text>
<text transform="translate(540,174) scale(0.8929,1)" x="0" y="0" fill="#000" text-anchor="start" font-size="11.76" font-weight="normal" >Hilfe</text>
<rect x="251" y="183" width="175" height="17" fill="#FFFFFF" /><rect x="251" y="183" width="175" height="1" fill="#C6A95E" /><rect x="251" y="183" width="1" height="17" fill="#C6A95E" /><rect x="252" y="184" width="173" height="1" fill="#000000" /><rect x="252" y="184" width="1" height="15" fill="#000000" /><rect x="251" y="199" width="175" height="1" fill="#F6F1E3" /><rect x="425" y="183" width="1" height="17" fill="#F6F1E3" /><rect x="252" y="198" width="173" height="1" fill="#E3D6B0" /><rect x="424" y="184" width="1" height="14" fill="#E3D6B0" />
<text transform="translate(255,196) scale(0.8929,1)" x="0" y="0" fill="#000" text-anchor="start" font-size="11.76" font-weight="normal" >WSWin</text>
<rect x="412" y="185" width="12" height="13" fill="#E3D6B0" /><rect x="412" y="185" width="12" height="1" fill="#F6F1E3" /><rect x="412" y="185" width="1" height="13" fill="#F6F1E3" /><rect x="412" y="197" width="12" height="1" fill="#000000" /><rect x="423" y="185" width="1" height="13" fill="#000000" /><rect x="413" y="196" width="10" height="1" fill="#C6A95E" /><rect x="422" y="186" width="1" height="11" fill="#C6A95E" />
<path d="M414.5,189 L421.5,189 L418.0,193 Z" fill="#000"/>
<text transform="translate(498.5,197) scale(0.97,1)" x="0" y="0" font-size="16" font-weight="bold" fill="#000">WSWin</text>
<text transform="translate(875,195) scale(0.8929,1)" x="0" y="0" fill="#000" text-anchor="start" font-size="11.76" font-weight="normal" >Zeit für Abbruch (Sekunden)</text>
<rect x="1012" y="180" width="30" height="20" fill="#FFFFFF" /><rect x="1012" y="180" width="30" height="1" fill="#C6A95E" /><rect x="1012" y="180" width="1" height="20" fill="#C6A95E" /><rect x="1013" y="181" width="28" height="1" fill="#000000" /><rect x="1013" y="181" width="1" height="18" fill="#000000" /><rect x="1012" y="199" width="30" height="1" fill="#F6F1E3" /><rect x="1041" y="180" width="1" height="20" fill="#F6F1E3" /><rect x="1013" y="198" width="28" height="1" fill="#E3D6B0" /><rect x="1040" y="181" width="1" height="17" fill="#E3D6B0" />
<text transform="translate(1017,195) scale(0.8929,1)" x="0" y="0" fill="#000" text-anchor="start" font-size="11.76" font-weight="normal" >30</text>
<rect x="251" y="204" width="140" height="25" fill="#E3D6B0" /><rect x="251" y="204" width="140" height="1" fill="#F6F1E3" /><rect x="251" y="204" width="1" height="25" fill="#F6F1E3" /><rect x="251" y="228" width="140" height="1" fill="#000000" /><rect x="390" y="204" width="1" height="25" fill="#000000" /><rect x="252" y="227" width="138" height="1" fill="#C6A95E" /><rect x="389" y="205" width="1" height="23" fill="#C6A95E" />
<rect x="391" y="204" width="141" height="25" fill="#E3D6B0" /><rect x="391" y="204" width="141" height="1" fill="#F6F1E3" /><rect x="391" y="204" width="1" height="25" fill="#F6F1E3" /><rect x="391" y="228" width="141" height="1" fill="#000000" /><rect x="531" y="204" width="1" height="25" fill="#000000" /><rect x="392" y="227" width="139" height="1" fill="#C6A95E" /><rect x="530" y="205" width="1" height="23" fill="#C6A95E" />
<rect x="251" y="230" width="140" height="25" fill="#E3D6B0" /><rect x="251" y="230" width="140" height="1" fill="#F6F1E3" /><rect x="251" y="230" width="1" height="25" fill="#F6F1E3" /><rect x="251" y="254" width="140" height="1" fill="#000000" /><rect x="390" y="230" width="1" height="25" fill="#000000" /><rect x="252" y="253" width="138" height="1" fill="#C6A95E" /><rect x="389" y="231" width="1" height="23" fill="#C6A95E" />
<rect x="391" y="230" width="141" height="25" fill="#E3D6B0" /><rect x="391" y="230" width="141" height="1" fill="#F6F1E3" /><rect x="391" y="230" width="1" height="25" fill="#F6F1E3" /><rect x="391" y="254" width="141" height="1" fill="#000000" /><rect x="531" y="230" width="1" height="25" fill="#000000" /><rect x="392" y="253" width="139" height="1" fill="#C6A95E" /><rect x="530" y="231" width="1" height="23" fill="#C6A95E" />
<rect x="674" y="204" width="146" height="25" fill="#E3D6B0" /><rect x="674" y="204" width="146" height="1" fill="#F6F1E3" /><rect x="674" y="204" width="1" height="25" fill="#F6F1E3" /><rect x="674" y="228" width="146" height="1" fill="#000000" /><rect x="819" y="204" width="1" height="25" fill="#000000" /><rect x="675" y="227" width="144" height="1" fill="#C6A95E" /><rect x="818" y="205" width="1" height="23" fill="#C6A95E" />
<rect x="674" y="230" width="146" height="25" fill="#E3D6B0" /><rect x="674" y="230" width="146" height="1" fill="#F6F1E3" /><rect x="674" y="230" width="1" height="25" fill="#F6F1E3" /><rect x="674" y="254" width="146" height="1" fill="#000000" /><rect x="819" y="230" width="1" height="25" fill="#000000" /><rect x="675" y="253" width="144" height="1" fill="#C6A95E" /><rect x="818" y="231" width="1" height="23" fill="#C6A95E" />
<text transform="translate(279,221) scale(0.8929,1)" x="0" y="0" fill="#000" text-anchor="start" font-size="11.76" font-weight="normal" >Lokale Auswahl lesen</text>
<rect x="279" y="222" width="6" height="1" fill="#000" />
<text transform="translate(279,247) scale(0.8929,1)" x="0" y="0" fill="#000" text-anchor="start" font-size="11.76" font-weight="normal" >Neue Dateien senden</text>
<rect x="279" y="248" width="7" height="1" fill="#000" />
<text transform="translate(438,221) scale(0.8929,1)" x="0" y="0" fill="#000" text-anchor="start" font-size="11.76" font-weight="normal" >Alle markieren</text>
<rect x="458" y="222" width="9" height="1" fill="#000" />
<text transform="translate(432,247) scale(0.8929,1)" x="0" y="0" fill="#000" text-anchor="start" font-size="11.76" font-weight="normal" >Alle demarkieren</text>
<rect x="452" y="248" width="6" height="1" fill="#000" />
<text transform="translate(710,221) scale(0.8929,1)" x="0" y="0" fill="#000" text-anchor="start" font-size="11.76" font-weight="normal" >Projekte bearbeiten</text>
<rect x="710" y="222" width="6" height="1" fill="#000" />
<text transform="translate(713,247) scale(0.8929,1)" x="0" y="0" fill="#000" text-anchor="start" font-size="11.76" font-weight="normal" >FTP-Client starten</text>
<rect x="713" y="248" width="6" height="1" fill="#000" />
<path d="M262,214 L264,211 L264,209 L274,209 L274,222 L272,225 L262,225 Z" fill="#000"/><path d="M265,210 L273,210 L272,212 L264,212 Z" fill="#E8E040"/><rect x="270" y="213" width="3" height="10" fill="#A09020"/><rect x="263" y="215" width="6" height="5" fill="#FFFF00"/><rect x="264" y="217" width="4" height="1" fill="#000"/><rect x="265" y="220" width="5" height="3" fill="#FFFF00"/><rect x="265" y="213" width="4" height="1" fill="#FFFFFF"/>
<path d="M260,251 L275,236 L275,251 Z" fill="#FFFFFF"/><rect x="260.5" y="236.5" width="4" height="4" fill="#00FFFF" stroke="#000" stroke-width="1"/><path d="M269,235 h3 v4 h2 l-3.5,4 l-3.5,-4 h2 Z" fill="#000"/><circle cx="267.5" cy="244.5" r="2.3" fill="#FFE800" stroke="#000" stroke-width="0.8" shape-rendering="auto"/><path d="M262,251 l3.5,-4 l3.5,4 Z" fill="#0000E0" stroke="#000" stroke-width="0.6"/><rect x="270.5" y="246.5" width="4" height="4" fill="#FF0000" stroke="#000" stroke-width="1"/>
<g shape-rendering="auto"><path d="M418,215 L421,214 L424,218 Q427,212 433,209 Q427,214 423,223 Z" fill="#FF0000" stroke="#600000" stroke-width="0.7"/></g>
<g shape-rendering="auto"><circle cx="419.5" cy="242.5" r="6.3" fill="none" stroke="#FF0000" stroke-width="2.2"/><line x1="415" y1="247" x2="424" y2="238" stroke="#FF0000" stroke-width="2.2"/></g>
<g shape-rendering="auto"><path d="M694,210 L707,224" stroke="#000" stroke-width="2.6"/><path d="M694,210 L707,224" stroke="#8A8A20" stroke-width="1.3"/><path d="M690,213 l4,-4 l6,0 l-3,3 l-3,3 Z" fill="#000"/><path d="M691,218 a3.5,3.5 0 1 0 4,5 l3,2.5" stroke="#000" stroke-width="1.6" fill="#fff"/><rect x="702" y="210" width="1.5" height="8" fill="#000"/><rect x="700" y="218" width="5" height="7" fill="#FF0000" stroke="#000" stroke-width="0.5"/></g>
<path d="M696,251 L708,238 L709,238 L709,251 Z" fill="#FFFFFF"/><rect x="699.5" y="235.5" width="4" height="4" fill="#00E0E0" stroke="#000" stroke-width="1"/><rect x="697.5" y="237.5" width="4" height="4" fill="#00E0E0" stroke="#000" stroke-width="1"/><rect x="694.5" y="240.5" width="4" height="4" fill="#00E0E0" stroke="#000" stroke-width="1"/><path d="M705,235 h3 v4 h2 l-3.5,4 l-3.5,-4 h2 Z" fill="#000"/><circle cx="702.5" cy="245.5" r="2" fill="#FFE800" stroke="#000" stroke-width="0.8" shape-rendering="auto"/><path d="M697,251 l3,-4 l3,4 Z" fill="#0000E0" stroke="#000" stroke-width="0.6"/><rect x="705" y="247" width="4" height="4" fill="#FF0000" stroke="#000" stroke-width="0.6"/>
<rect x="533" y="205" width="139" height="47" fill="#000" />
<defs><radialGradient id="pl" cx="0.45" cy="0.45" r="0.55"><stop offset="0" stop-color="#80A8F0"/><stop offset="0.35" stop-color="#3060B0"/><stop offset="0.8" stop-color="#203870"/><stop offset="1" stop-color="#101830"/></radialGradient><radialGradient id="gx" cx="0.5" cy="0.5" r="0.5"><stop offset="0" stop-color="#7080A0"/><stop offset="1" stop-color="#000" stop-opacity="0"/></radialGradient></defs>
<g shape-rendering="auto">
<ellipse cx="613" cy="228" rx="30" ry="11" fill="url(#pl)"/>
<path d="M596,222 q6,-4 12,-2 q-3,4 -9,5 Z" fill="#C0B060" opacity="0.8"/>
<path d="M618,231 q8,-3 14,0 q-6,4 -13,2 Z" fill="#A0A060" opacity="0.7"/>
<path d="M604,235 q6,1 10,-1 q-4,3 -10,2 Z" fill="#C0C0C0" opacity="0.8"/>
<ellipse cx="659" cy="209" rx="13" ry="6" fill="url(#gx)"/>
<ellipse cx="540" cy="232.5" rx="5" ry="2" fill="#D07090" opacity="0.9"/>
<circle cx="551" cy="243" r="1" fill="#FFFFFF"/>
<ellipse cx="657" cy="241" rx="6" ry="3" fill="#E07840"/>
</g>
<text x="572" y="221" font-size="12" fill="#FFFFFF" letter-spacing="1.1">Copyright</text>
<text transform="translate(555.5,247) scale(1.02,1)" x="0" y="0" font-size="22" font-weight="bold" fill="#FF0000">OE3BSB</text>
<rect x="821" y="204" width="230" height="51" fill="#E3D6B0" /><rect x="821" y="204" width="230" height="1" fill="#C6A95E" /><rect x="821" y="204" width="1" height="51" fill="#C6A95E" /><rect x="821" y="254" width="230" height="1" fill="#F6F1E3" /><rect x="1050" y="204" width="1" height="51" fill="#F6F1E3" />
<rect x="822" y="205" width="229" height="1" fill="#F6F1E3" />
<text transform="translate(826,217) scale(0.8929,1)" x="0" y="0" fill="#000" text-anchor="start" font-size="11.87" font-weight="normal" >Internetverbindung immer trennen</text>
<circle cx="1018" cy="213" r="5.5" fill="#FFFFFF" stroke="#C6A95E" stroke-width="1"/>
<path d="M1013,213 a5,5 0 0 1 9,-3" stroke="#000" stroke-width="1" fill="none"/>
<text transform="translate(826,233) scale(0.8929,1)" x="0" y="0" fill="#000" text-anchor="start" font-size="11.87" font-weight="normal" >Trennen, wenn keine Verbindung war</text>
<circle cx="1018" cy="229" r="5.5" fill="#FFFFFF" stroke="#C6A95E" stroke-width="1"/>
<path d="M1013,229 a5,5 0 0 1 9,-3" stroke="#000" stroke-width="1" fill="none"/>
<text transform="translate(826,249) scale(0.8929,1)" x="0" y="0" fill="#000" text-anchor="start" font-size="11.87" font-weight="normal" >Internetverbindung nie trennen</text>
<circle cx="1018" cy="245" r="5.5" fill="#FFFFFF" stroke="#C6A95E" stroke-width="1"/>
<path d="M1013,245 a5,5 0 0 1 9,-3" stroke="#000" stroke-width="1" fill="none"/>
<circle cx="1018" cy="213" r="2" fill="#000"/>
<text x="253" y="273" font-weight="bold" font-size="12.5" letter-spacing="1" fill="#000">Lokal:</text>
<text x="253" y="287" font-weight="bold" font-size="12.5" letter-spacing="1.7" fill="#000">Verz.:</text>
<text transform="translate(302,273) scale(0.8929,1)" x="0" y="0" fill="#000" text-anchor="start" font-size="11.87" font-weight="normal" >4317 Dateien (69.287.910 Byte)</text>
<text transform="translate(302,287) scale(0.8929,1)" x="0" y="0" fill="#000" text-anchor="start" font-size="11.65" font-weight="normal" >C:\Programme\WsWin\HTML\</text>
<text x="643" y="273" font-weight="bold" font-size="12.5" letter-spacing="1" fill="#000">Server:</text>
<text x="643" y="287" font-weight="bold" font-size="12.5" letter-spacing="1.7" fill="#000">Verz.:</text>
<text transform="translate(701,273) scale(0.8929,1)" x="0" y="0" fill="#000" text-anchor="start" font-size="13.33" font-weight="normal" >www.dessau-web.de</text>
<text transform="translate(701,287) scale(0.8929,1)" x="0" y="0" fill="#000" text-anchor="start" font-size="12.66" font-weight="normal" >/dessauwetter/wswin/2007</text></g>
<g><rect x="250" y="292" width="388" height="290" fill="#FFFFFF" /><rect x="250" y="292" width="388" height="1" fill="#C6A95E" /><rect x="250" y="292" width="1" height="290" fill="#C6A95E" /><rect x="251" y="293" width="386" height="1" fill="#000000" /><rect x="251" y="293" width="1" height="288" fill="#000000" /><rect x="250" y="581" width="388" height="1" fill="#F6F1E3" /><rect x="637" y="292" width="1" height="290" fill="#F6F1E3" /><rect x="251" y="580" width="386" height="1" fill="#E3D6B0" /><rect x="636" y="293" width="1" height="287" fill="#E3D6B0" />
<rect x="252" y="294" width="26" height="17" fill="#E3D6B0" /><rect x="252" y="294" width="26" height="1" fill="#F6F1E3" /><rect x="252" y="294" width="1" height="17" fill="#F6F1E3" /><rect x="252" y="310" width="26" height="1" fill="#000000" /><rect x="277" y="294" width="1" height="17" fill="#000000" /><rect x="253" y="309" width="24" height="1" fill="#C6A95E" /><rect x="276" y="295" width="1" height="15" fill="#C6A95E" />
<rect x="278" y="294" width="129" height="17" fill="#E3D6B0" /><rect x="278" y="294" width="129" height="1" fill="#F6F1E3" /><rect x="278" y="294" width="1" height="17" fill="#F6F1E3" /><rect x="278" y="310" width="129" height="1" fill="#000000" /><rect x="406" y="294" width="1" height="17" fill="#000000" /><rect x="279" y="309" width="127" height="1" fill="#C6A95E" /><rect x="405" y="295" width="1" height="15" fill="#C6A95E" />
<rect x="407" y="294" width="144" height="17" fill="#E3D6B0" /><rect x="407" y="294" width="144" height="1" fill="#F6F1E3" /><rect x="407" y="294" width="1" height="17" fill="#F6F1E3" /><rect x="407" y="310" width="144" height="1" fill="#000000" /><rect x="550" y="294" width="1" height="17" fill="#000000" /><rect x="408" y="309" width="142" height="1" fill="#C6A95E" /><rect x="549" y="295" width="1" height="15" fill="#C6A95E" />
<rect x="551" y="294" width="66" height="17" fill="#E3D6B0" /><rect x="551" y="294" width="66" height="1" fill="#F6F1E3" /><rect x="551" y="294" width="1" height="17" fill="#F6F1E3" /><rect x="551" y="310" width="66" height="1" fill="#000000" /><rect x="616" y="294" width="1" height="17" fill="#000000" /><rect x="552" y="309" width="64" height="1" fill="#C6A95E" /><rect x="615" y="295" width="1" height="15" fill="#C6A95E" />
<rect x="617" y="294" width="8" height="17" fill="#E3D6B0" /><rect x="617" y="294" width="8" height="1" fill="#F6F1E3" /><rect x="617" y="294" width="1" height="17" fill="#F6F1E3" /><rect x="617" y="310" width="8" height="1" fill="#000000" /><rect x="624" y="294" width="1" height="17" fill="#000000" /><rect x="618" y="309" width="6" height="1" fill="#C6A95E" /><rect x="623" y="295" width="1" height="15" fill="#C6A95E" />
<text transform="translate(255,306) scale(0.8929,1)" x="0" y="0" fill="#000" text-anchor="start" font-size="11.76" font-weight="normal" >Neu</text>
<text transform="translate(281,306) scale(0.8929,1)" x="0" y="0" fill="#000" text-anchor="start" font-size="11.76" font-weight="normal" >Datei-Name</text>
<text transform="translate(410,306) scale(0.8929,1)" x="0" y="0" fill="#000" text-anchor="start" font-size="11.76" font-weight="normal" >Lokales Verzeichnis</text>
<text transform="translate(614,306) scale(0.8929,1)" x="0" y="0" fill="#000" text-anchor="end" font-size="11.76" font-weight="normal" >Bytes</text>
<text transform="translate(619,306) scale(0.8929,1)" x="0" y="0" fill="#000" text-anchor="start" font-size="11.76" font-weight="normal" >D</text>
<clipPath id="lc"><rect x="252" y="311" width="371" height="257"/></clipPath>
<clipPath id="c3"><rect x="407" y="300" width="143" height="280"/></clipPath>
<g clip-path="url(#lc)">
<rect x="252" y="327" width="371" height="1" fill="#C8C8C8" />
<text transform="translate(281,323.5) scale(0.8929,1)" x="0" y="0" fill="#000" text-anchor="start" font-size="11.76" font-weight="normal" >20070424.htm</text>
<g clip-path="url(#c3)"><text transform="translate(410,323.5) scale(0.8929,1)" x="0" y="0" fill="#000" text-anchor="start" font-size="12.10" font-weight="normal" >C:\Programme\WsWin\HTML\2007\</text></g>
<text transform="translate(614,323.5) scale(0.8929,1)" x="0" y="0" fill="#000" text-anchor="end" font-size="11.76" font-weight="normal" >120371</text>
<text transform="translate(619,323.5) scale(0.8929,1)" x="0" y="0" fill="#000" text-anchor="start" font-size="11.76" font-weight="normal" >2</text>
<rect x="252" y="344" width="371" height="1" fill="#C8C8C8" />
<text transform="translate(281,340.5) scale(0.8929,1)" x="0" y="0" fill="#000" text-anchor="start" font-size="11.76" font-weight="normal" >20070425.gif</text>
<g clip-path="url(#c3)"><text transform="translate(410,340.5) scale(0.8929,1)" x="0" y="0" fill="#000" text-anchor="start" font-size="12.10" font-weight="normal" >C:\Programme\WsWin\HTML\2007\</text></g>
<text transform="translate(614,340.5) scale(0.8929,1)" x="0" y="0" fill="#000" text-anchor="end" font-size="11.76" font-weight="normal" >38019</text>
<text transform="translate(619,340.5) scale(0.8929,1)" x="0" y="0" fill="#000" text-anchor="start" font-size="11.76" font-weight="normal" >2</text>
<rect x="252" y="361" width="371" height="1" fill="#C8C8C8" />
<text transform="translate(281,357.5) scale(0.8929,1)" x="0" y="0" fill="#000" text-anchor="start" font-size="11.76" font-weight="normal" >20070425.htm</text>
<g clip-path="url(#c3)"><text transform="translate(410,357.5) scale(0.8929,1)" x="0" y="0" fill="#000" text-anchor="start" font-size="12.10" font-weight="normal" >C:\Programme\WsWin\HTML\2007\</text></g>
<text transform="translate(614,357.5) scale(0.8929,1)" x="0" y="0" fill="#000" text-anchor="end" font-size="11.76" font-weight="normal" >118833</text>
<text transform="translate(619,357.5) scale(0.8929,1)" x="0" y="0" fill="#000" text-anchor="start" font-size="11.76" font-weight="normal" >2</text>
<rect x="252" y="378" width="371" height="1" fill="#C8C8C8" />
<text transform="translate(281,374.5) scale(0.8929,1)" x="0" y="0" fill="#000" text-anchor="start" font-size="11.76" font-weight="normal" >20070426.gif</text>
<g clip-path="url(#c3)"><text transform="translate(410,374.5) scale(0.8929,1)" x="0" y="0" fill="#000" text-anchor="start" font-size="12.10" font-weight="normal" >C:\Programme\WsWin\HTML\2007\</text></g>
<text transform="translate(614,374.5) scale(0.8929,1)" x="0" y="0" fill="#000" text-anchor="end" font-size="11.76" font-weight="normal" >38387</text>
<text transform="translate(619,374.5) scale(0.8929,1)" x="0" y="0" fill="#000" text-anchor="start" font-size="11.76" font-weight="normal" >2</text>
<rect x="252" y="395" width="371" height="1" fill="#C8C8C8" />
<text transform="translate(281,391.5) scale(0.8929,1)" x="0" y="0" fill="#000" text-anchor="start" font-size="11.76" font-weight="normal" >20070426.htm</text>
<g clip-path="url(#c3)"><text transform="translate(410,391.5) scale(0.8929,1)" x="0" y="0" fill="#000" text-anchor="start" font-size="12.10" font-weight="normal" >C:\Programme\WsWin\HTML\2007\</text></g>
<text transform="translate(614,391.5) scale(0.8929,1)" x="0" y="0" fill="#000" text-anchor="end" font-size="11.76" font-weight="normal" >118901</text>
<text transform="translate(619,391.5) scale(0.8929,1)" x="0" y="0" fill="#000" text-anchor="start" font-size="11.76" font-weight="normal" >2</text>
<rect x="252" y="412" width="371" height="1" fill="#C8C8C8" />
<text transform="translate(281,408.5) scale(0.8929,1)" x="0" y="0" fill="#000" text-anchor="start" font-size="11.76" font-weight="normal" >20070427.gif</text>
<g clip-path="url(#c3)"><text transform="translate(410,408.5) scale(0.8929,1)" x="0" y="0" fill="#000" text-anchor="start" font-size="12.10" font-weight="normal" >C:\Programme\WsWin\HTML\2007\</text></g>
<text transform="translate(614,408.5) scale(0.8929,1)" x="0" y="0" fill="#000" text-anchor="end" font-size="11.76" font-weight="normal" >38102</text>
<text transform="translate(619,408.5) scale(0.8929,1)" x="0" y="0" fill="#000" text-anchor="start" font-size="11.76" font-weight="normal" >2</text>
<rect x="252" y="429" width="371" height="1" fill="#C8C8C8" />
<text transform="translate(281,425.5) scale(0.8929,1)" x="0" y="0" fill="#000" text-anchor="start" font-size="11.76" font-weight="normal" >20070427.htm</text>
<g clip-path="url(#c3)"><text transform="translate(410,425.5) scale(0.8929,1)" x="0" y="0" fill="#000" text-anchor="start" font-size="12.10" font-weight="normal" >C:\Programme\WsWin\HTML\2007\</text></g>
<text transform="translate(614,425.5) scale(0.8929,1)" x="0" y="0" fill="#000" text-anchor="end" font-size="11.76" font-weight="normal" >119179</text>
<text transform="translate(619,425.5) scale(0.8929,1)" x="0" y="0" fill="#000" text-anchor="start" font-size="11.76" font-weight="normal" >2</text>
<rect x="252" y="446" width="371" height="1" fill="#C8C8C8" />
<text transform="translate(281,442.5) scale(0.8929,1)" x="0" y="0" fill="#000" text-anchor="start" font-size="11.76" font-weight="normal" >20070428.gif</text>
<g clip-path="url(#c3)"><text transform="translate(410,442.5) scale(0.8929,1)" x="0" y="0" fill="#000" text-anchor="start" font-size="12.10" font-weight="normal" >C:\Programme\WsWin\HTML\2007\</text></g>
<text transform="translate(614,442.5) scale(0.8929,1)" x="0" y="0" fill="#000" text-anchor="end" font-size="11.76" font-weight="normal" >38182</text>
<text transform="translate(619,442.5) scale(0.8929,1)" x="0" y="0" fill="#000" text-anchor="start" font-size="11.76" font-weight="normal" >2</text>
<rect x="252" y="463" width="371" height="1" fill="#C8C8C8" />
<text transform="translate(281,459.5) scale(0.8929,1)" x="0" y="0" fill="#000" text-anchor="start" font-size="11.76" font-weight="normal" >20070428.htm</text>
<g clip-path="url(#c3)"><text transform="translate(410,459.5) scale(0.8929,1)" x="0" y="0" fill="#000" text-anchor="start" font-size="12.10" font-weight="normal" >C:\Programme\WsWin\HTML\2007\</text></g>
<text transform="translate(614,459.5) scale(0.8929,1)" x="0" y="0" fill="#000" text-anchor="end" font-size="11.76" font-weight="normal" >119817</text>
<text transform="translate(619,459.5) scale(0.8929,1)" x="0" y="0" fill="#000" text-anchor="start" font-size="11.76" font-weight="normal" >2</text>
<rect x="252" y="480" width="371" height="1" fill="#C8C8C8" />
<text transform="translate(281,476.5) scale(0.8929,1)" x="0" y="0" fill="#000" text-anchor="start" font-size="11.76" font-weight="normal" >20070429.gif</text>
<g clip-path="url(#c3)"><text transform="translate(410,476.5) scale(0.8929,1)" x="0" y="0" fill="#000" text-anchor="start" font-size="12.10" font-weight="normal" >C:\Programme\WsWin\HTML\2007\</text></g>
<text transform="translate(614,476.5) scale(0.8929,1)" x="0" y="0" fill="#000" text-anchor="end" font-size="11.76" font-weight="normal" >43114</text>
<text transform="translate(619,476.5) scale(0.8929,1)" x="0" y="0" fill="#000" text-anchor="start" font-size="11.76" font-weight="normal" >3</text>
<rect x="252" y="497" width="371" height="1" fill="#C8C8C8" />
<text transform="translate(281,493.5) scale(0.8929,1)" x="0" y="0" fill="#000" text-anchor="start" font-size="11.76" font-weight="normal" >20070429.htm</text>
<g clip-path="url(#c3)"><text transform="translate(410,493.5) scale(0.8929,1)" x="0" y="0" fill="#000" text-anchor="start" font-size="12.10" font-weight="normal" >C:\Programme\WsWin\HTML\2007\</text></g>
<text transform="translate(614,493.5) scale(0.8929,1)" x="0" y="0" fill="#000" text-anchor="end" font-size="11.76" font-weight="normal" >118545</text>
<text transform="translate(619,493.5) scale(0.8929,1)" x="0" y="0" fill="#000" text-anchor="start" font-size="11.76" font-weight="normal" >3</text>
<rect x="252" y="514" width="371" height="1" fill="#C8C8C8" />
<text transform="translate(281,510.5) scale(0.8929,1)" x="0" y="0" fill="#000" text-anchor="start" font-size="11.76" font-weight="normal" >20070430.gif</text>
<g clip-path="url(#c3)"><text transform="translate(410,510.5) scale(0.8929,1)" x="0" y="0" fill="#000" text-anchor="start" font-size="12.10" font-weight="normal" >C:\Programme\WsWin\HTML\2007\</text></g>
<text transform="translate(614,510.5) scale(0.8929,1)" x="0" y="0" fill="#000" text-anchor="end" font-size="11.76" font-weight="normal" >38083</text>
<text transform="translate(619,510.5) scale(0.8929,1)" x="0" y="0" fill="#000" text-anchor="start" font-size="11.76" font-weight="normal" >0</text>
<rect x="252" y="531" width="371" height="1" fill="#C8C8C8" />
<text transform="translate(281,527.5) scale(0.8929,1)" x="0" y="0" fill="#000" text-anchor="start" font-size="11.76" font-weight="normal" >20070430.htm</text>
<g clip-path="url(#c3)"><text transform="translate(410,527.5) scale(0.8929,1)" x="0" y="0" fill="#000" text-anchor="start" font-size="12.10" font-weight="normal" >C:\Programme\WsWin\HTML\2007\</text></g>
<text transform="translate(614,527.5) scale(0.8929,1)" x="0" y="0" fill="#000" text-anchor="end" font-size="11.76" font-weight="normal" >118509</text>
<text transform="translate(619,527.5) scale(0.8929,1)" x="0" y="0" fill="#000" text-anchor="start" font-size="11.76" font-weight="normal" >0</text>
<rect x="252" y="548" width="371" height="1" fill="#C8C8C8" />
<text transform="translate(281,544.5) scale(0.8929,1)" x="0" y="0" fill="#000" text-anchor="start" font-size="11.76" font-weight="normal" >20070501.gif</text>
<g clip-path="url(#c3)"><text transform="translate(410,544.5) scale(0.8929,1)" x="0" y="0" fill="#000" text-anchor="start" font-size="12.10" font-weight="normal" >C:\Programme\WsWin\HTML\2007\</text></g>
<text transform="translate(614,544.5) scale(0.8929,1)" x="0" y="0" fill="#000" text-anchor="end" font-size="11.76" font-weight="normal" >41920</text>
<text transform="translate(619,544.5) scale(0.8929,1)" x="0" y="0" fill="#000" text-anchor="start" font-size="11.76" font-weight="normal" >0</text>
<rect x="252" y="548" width="371" height="17" fill="#C6A34A" />
<rect x="252.5" y="548.5" width="372" height="16" fill="none" stroke="#3050D0" stroke-width="1" stroke-dasharray="1,2"/>
<text transform="translate(257,561) scale(0.8929,1)" x="0" y="0" fill="#000" text-anchor="start" font-size="11.76" font-weight="normal" >+</text>
<rect x="252" y="565" width="371" height="1" fill="#C8C8C8" />
<text transform="translate(281,561.5) scale(0.8929,1)" x="0" y="0" fill="#000" text-anchor="start" font-size="11.76" font-weight="normal" >20070501.htm</text>
<g clip-path="url(#c3)"><text transform="translate(410,561.5) scale(0.8929,1)" x="0" y="0" fill="#000" text-anchor="start" font-size="12.10" font-weight="normal" >C:\Programme\WsWin\HTML\2007\</text></g>
<text transform="translate(614,561.5) scale(0.8929,1)" x="0" y="0" fill="#000" text-anchor="end" font-size="11.76" font-weight="normal" >103128</text>
<text transform="translate(619,561.5) scale(0.8929,1)" x="0" y="0" fill="#000" text-anchor="start" font-size="11.76" font-weight="normal" >0</text>
<rect x="277" y="311" width="1" height="257" fill="#C8C8C8" />
<rect x="406" y="311" width="1" height="257" fill="#C8C8C8" />
<rect x="550" y="311" width="1" height="257" fill="#C8C8C8" />
<rect x="616" y="311" width="1" height="257" fill="#C8C8C8" />
</g>
<rect x="624" y="294" width="12" height="274" fill="#F1EAD7" />
<rect x="624" y="294" width="12" height="13" fill="#E3D6B0" /><rect x="624" y="294" width="12" height="1" fill="#F6F1E3" /><rect x="624" y="294" width="1" height="13" fill="#F6F1E3" /><rect x="624" y="306" width="12" height="1" fill="#000000" /><rect x="635" y="294" width="1" height="13" fill="#000000" /><rect x="625" y="305" width="10" height="1" fill="#C6A95E" /><rect x="634" y="295" width="1" height="11" fill="#C6A95E" />
<path d="M626.5,302 L633.5,302 L630.0,298 Z" fill="#000"/>
<rect x="624" y="446" width="12" height="13" fill="#E3D6B0" /><rect x="624" y="446" width="12" height="1" fill="#F6F1E3" /><rect x="624" y="446" width="1" height="13" fill="#F6F1E3" /><rect x="624" y="458" width="12" height="1" fill="#000000" /><rect x="635" y="446" width="1" height="13" fill="#000000" /><rect x="625" y="457" width="10" height="1" fill="#C6A95E" /><rect x="634" y="447" width="1" height="11" fill="#C6A95E" />
<rect x="624" y="555" width="12" height="13" fill="#E3D6B0" /><rect x="624" y="555" width="12" height="1" fill="#F6F1E3" /><rect x="624" y="555" width="1" height="13" fill="#F6F1E3" /><rect x="624" y="567" width="12" height="1" fill="#000000" /><rect x="635" y="555" width="1" height="13" fill="#000000" /><rect x="625" y="566" width="10" height="1" fill="#C6A95E" /><rect x="634" y="556" width="1" height="11" fill="#C6A95E" />
<path d="M626.5,559 L633.5,559 L630.0,563 Z" fill="#000"/>
<rect x="252" y="568" width="372" height="13" fill="#F1EAD7" />
<rect x="252" y="568" width="13" height="13" fill="#E3D6B0" /><rect x="252" y="568" width="13" height="1" fill="#F6F1E3" /><rect x="252" y="568" width="1" height="13" fill="#F6F1E3" /><rect x="252" y="580" width="13" height="1" fill="#000000" /><rect x="264" y="568" width="1" height="13" fill="#000000" /><rect x="253" y="579" width="11" height="1" fill="#C6A95E" /><rect x="263" y="569" width="1" height="11" fill="#C6A95E" />
<path d="M260,570.5 L260,578.5 L256,574.5 Z" fill="#000"/>
<rect x="265" y="568" width="13" height="13" fill="#E3D6B0" /><rect x="265" y="568" width="13" height="1" fill="#F6F1E3" /><rect x="265" y="568" width="1" height="13" fill="#F6F1E3" /><rect x="265" y="580" width="13" height="1" fill="#000000" /><rect x="277" y="568" width="1" height="13" fill="#000000" /><rect x="266" y="579" width="11" height="1" fill="#C6A95E" /><rect x="276" y="569" width="1" height="11" fill="#C6A95E" />
<rect x="610" y="568" width="13" height="13" fill="#E3D6B0" /><rect x="610" y="568" width="13" height="1" fill="#F6F1E3" /><rect x="610" y="568" width="1" height="13" fill="#F6F1E3" /><rect x="610" y="580" width="13" height="1" fill="#000000" /><rect x="622" y="568" width="1" height="13" fill="#000000" /><rect x="611" y="579" width="11" height="1" fill="#C6A95E" /><rect x="621" y="569" width="1" height="11" fill="#C6A95E" />
<path d="M614,570.5 L614,578.5 L618,574.5 Z" fill="#000"/>
<rect x="623" y="568" width="13" height="13" fill="#E3D6B0" />
<rect x="642" y="292" width="400" height="290" fill="#FFFFFF" /><rect x="642" y="292" width="400" height="1" fill="#C6A95E" /><rect x="642" y="292" width="1" height="290" fill="#C6A95E" /><rect x="643" y="293" width="398" height="1" fill="#000000" /><rect x="643" y="293" width="1" height="288" fill="#000000" /><rect x="642" y="581" width="400" height="1" fill="#F6F1E3" /><rect x="1041" y="292" width="1" height="290" fill="#F6F1E3" /><rect x="643" y="580" width="398" height="1" fill="#E3D6B0" /><rect x="1040" y="293" width="1" height="287" fill="#E3D6B0" />
<rect x="644" y="294" width="181" height="17" fill="#E3D6B0" /><rect x="644" y="294" width="181" height="1" fill="#F6F1E3" /><rect x="644" y="294" width="1" height="17" fill="#F6F1E3" /><rect x="644" y="310" width="181" height="1" fill="#000000" /><rect x="824" y="294" width="1" height="17" fill="#000000" /><rect x="645" y="309" width="179" height="1" fill="#C6A95E" /><rect x="823" y="295" width="1" height="15" fill="#C6A95E" />
<rect x="825" y="294" width="61" height="17" fill="#E3D6B0" /><rect x="825" y="294" width="61" height="1" fill="#F6F1E3" /><rect x="825" y="294" width="1" height="17" fill="#F6F1E3" /><rect x="825" y="310" width="61" height="1" fill="#000000" /><rect x="885" y="294" width="1" height="17" fill="#000000" /><rect x="826" y="309" width="59" height="1" fill="#C6A95E" /><rect x="884" y="295" width="1" height="15" fill="#C6A95E" />
<rect x="886" y="294" width="66" height="17" fill="#E3D6B0" /><rect x="886" y="294" width="66" height="1" fill="#F6F1E3" /><rect x="886" y="294" width="1" height="17" fill="#F6F1E3" /><rect x="886" y="310" width="66" height="1" fill="#000000" /><rect x="951" y="294" width="1" height="17" fill="#000000" /><rect x="887" y="309" width="64" height="1" fill="#C6A95E" /><rect x="950" y="295" width="1" height="15" fill="#C6A95E" />
<rect x="952" y="294" width="60" height="17" fill="#E3D6B0" /><rect x="952" y="294" width="60" height="1" fill="#F6F1E3" /><rect x="952" y="294" width="1" height="17" fill="#F6F1E3" /><rect x="952" y="310" width="60" height="1" fill="#000000" /><rect x="1011" y="294" width="1" height="17" fill="#000000" /><rect x="953" y="309" width="58" height="1" fill="#C6A95E" /><rect x="1010" y="295" width="1" height="15" fill="#C6A95E" />
<text transform="translate(647,306) scale(0.8929,1)" x="0" y="0" fill="#000" text-anchor="start" font-size="11.76" font-weight="normal" >Name</text>
<text transform="translate(883,306) scale(0.8929,1)" x="0" y="0" fill="#000" text-anchor="end" font-size="11.76" font-weight="normal" >Bytes</text>
<text transform="translate(918.5,306) scale(0.8929,1)" x="0" y="0" fill="#000" text-anchor="middle" font-size="11.76" font-weight="normal" >Datum</text>
<text transform="translate(954,306) scale(0.8929,1)" x="0" y="0" fill="#000" text-anchor="start" font-size="11.76" font-weight="normal" >Attribute</text>
<rect x="644" y="311" width="368" height="16" fill="#C6A34A" />
<rect x="824" y="311" width="1" height="16" fill="#D8C890" />
<rect x="885" y="311" width="1" height="16" fill="#D8C890" />
<rect x="951" y="311" width="1" height="16" fill="#D8C890" />
<rect x="642" y="581" width="400" height="27" fill="#E3D6B0" />
<rect x="642" y="581" width="400" height="1" fill="#F6F1E3" />
<rect x="642" y="582" width="162" height="26" fill="#E3D6B0" /><rect x="642" y="582" width="162" height="1" fill="#F6F1E3" /><rect x="642" y="582" width="1" height="26" fill="#F6F1E3" /><rect x="642" y="607" width="162" height="1" fill="#000000" /><rect x="803" y="582" width="1" height="26" fill="#000000" /><rect x="643" y="606" width="160" height="1" fill="#C6A95E" /><rect x="802" y="583" width="1" height="24" fill="#C6A95E" />
<text transform="translate(673,600) scale(0.8929,1)" x="0" y="0" fill="#000" text-anchor="start" font-size="11.76" font-weight="normal" >Server-Verzeichnis lesen</text>
<rect x="707" y="601" width="7" height="1" fill="#000" />
<g stroke="#000" stroke-width="1" fill="#fff"><rect x="659.5" y="588.5" width="5" height="3"/><rect x="654.5" y="594.5" width="5" height="3"/><rect x="664.5" y="594.5" width="5" height="3"/><rect x="654.5" y="600.5" width="5" height="3"/><rect x="664.5" y="600.5" width="5" height="3"/></g><rect x="661" y="592" width="2" height="12" fill="#FF0000"/>
<text transform="translate(252,596) scale(0.8929,1)" x="0" y="0" fill="#000" text-anchor="start" font-size="11.87" font-weight="normal" >332 Dateien zum Senden markiert (2.407.589 Bytes)</text>
<rect x="250" y="608" width="790" height="94" fill="#FFFFFF" /><rect x="250" y="608" width="790" height="1" fill="#C6A95E" /><rect x="250" y="608" width="1" height="94" fill="#C6A95E" /><rect x="251" y="609" width="788" height="1" fill="#000000" /><rect x="251" y="609" width="1" height="92" fill="#000000" /><rect x="250" y="701" width="790" height="1" fill="#F6F1E3" /><rect x="1039" y="608" width="1" height="94" fill="#F6F1E3" /><rect x="251" y="700" width="788" height="1" fill="#E3D6B0" /><rect x="1038" y="609" width="1" height="91" fill="#E3D6B0" />
<text transform="translate(254.5,621) scale(0.8929,1)" x="0" y="0" fill="#0000FF" text-anchor="start" font-size="10.75" font-weight="normal" >&lt;&lt;-</text>
<text transform="translate(272,621) scale(0.8929,1)" x="0" y="0" fill="#0000FF" text-anchor="start" font-size="11.87" font-weight="normal" >01.05.2007 21:03:06</text>
<text transform="translate(380,621) scale(0.8929,1)" x="0" y="0" fill="#0000FF" text-anchor="start" font-size="12.15" font-weight="normal" >C:\Programme\WsWin\HTML\de_sunmoon.html erfolgreich gesendet</text>
<text transform="translate(254.5,634) scale(0.8929,1)" x="0" y="0" fill="#FF0000" text-anchor="start" font-size="10.75" font-weight="normal" >-&gt;&gt;</text>
<text transform="translate(272,634) scale(0.8929,1)" x="0" y="0" fill="#FF0000" text-anchor="start" font-size="11.87" font-weight="normal" >01.05.2007 21:03:06</text>
<text transform="translate(380,634) scale(0.8929,1)" x="0" y="0" fill="#FF0000" text-anchor="start" font-size="12.15" font-weight="normal" >Starting FTP transfer</text>
<text transform="translate(254.5,647) scale(0.8929,1)" x="0" y="0" fill="#FF0000" text-anchor="start" font-size="10.75" font-weight="normal" >-&gt;&gt;</text>
<text transform="translate(272,647) scale(0.8929,1)" x="0" y="0" fill="#FF0000" text-anchor="start" font-size="11.87" font-weight="normal" >01.05.2007 21:03:06</text>
<text transform="translate(380,647) scale(0.8929,1)" x="0" y="0" fill="#FF0000" text-anchor="start" font-size="12.15" font-weight="normal" >Transfer complete</text>
<text transform="translate(254.5,660) scale(0.8929,1)" x="0" y="0" fill="#0000FF" text-anchor="start" font-size="10.75" font-weight="normal" >&lt;&lt;-</text>
<text transform="translate(272,660) scale(0.8929,1)" x="0" y="0" fill="#0000FF" text-anchor="start" font-size="11.87" font-weight="normal" >01.05.2007 21:03:06</text>
<text transform="translate(380,660) scale(0.8929,1)" x="0" y="0" fill="#0000FF" text-anchor="start" font-size="12.15" font-weight="normal" >C:\Programme\WsWin\HTML\export.xml erfolgreich gesendet</text>
<text transform="translate(254.5,673) scale(0.8929,1)" x="0" y="0" fill="#FF0000" text-anchor="start" font-size="10.75" font-weight="normal" >-&gt;&gt;</text>
<text transform="translate(272,673) scale(0.8929,1)" x="0" y="0" fill="#FF0000" text-anchor="start" font-size="11.87" font-weight="normal" >01.05.2007 21:03:06</text>
<text transform="translate(380,673) scale(0.8929,1)" x="0" y="0" fill="#FF0000" text-anchor="start" font-size="12.15" font-weight="normal" >Starting FTP transfer</text>
<text transform="translate(254.5,686) scale(0.8929,1)" x="0" y="0" fill="#FF0000" text-anchor="start" font-size="10.75" font-weight="normal" >-&gt;&gt;</text>
<text transform="translate(272,686) scale(0.8929,1)" x="0" y="0" fill="#FF0000" text-anchor="start" font-size="11.87" font-weight="normal" >01.05.2007 21:03:07</text>
<text transform="translate(380,686) scale(0.8929,1)" x="0" y="0" fill="#FF0000" text-anchor="start" font-size="12.15" font-weight="normal" >Transfer complete</text>
<text transform="translate(254.5,699) scale(0.8929,1)" x="0" y="0" fill="#0000FF" text-anchor="start" font-size="10.75" font-weight="normal" >&lt;&lt;-</text>
<text transform="translate(272,699) scale(0.8929,1)" x="0" y="0" fill="#0000FF" text-anchor="start" font-size="11.87" font-weight="normal" >01.05.2007 21:03:07</text>
<text transform="translate(380,699) scale(0.8929,1)" x="0" y="0" fill="#0000FF" text-anchor="start" font-size="12.15" font-weight="normal" >C:\Programme\WsWin\HTML\instr_d.gif erfolgreich gesendet</text>
<rect x="1014" y="610" width="12" height="90" fill="#F1EAD7" />
<rect x="1014" y="611" width="12" height="12" fill="#E3D6B0" /><rect x="1014" y="611" width="12" height="1" fill="#F6F1E3" /><rect x="1014" y="611" width="1" height="12" fill="#F6F1E3" /><rect x="1014" y="622" width="12" height="1" fill="#000000" /><rect x="1025" y="611" width="1" height="12" fill="#000000" /><rect x="1015" y="621" width="10" height="1" fill="#C6A95E" /><rect x="1024" y="612" width="1" height="10" fill="#C6A95E" />
<path d="M1016.5,619 L1023.5,619 L1020.0,615 Z" fill="#000"/>
<rect x="1014" y="623" width="12" height="5" fill="#E3D6B0" /><rect x="1014" y="623" width="12" height="1" fill="#F6F1E3" /><rect x="1014" y="623" width="1" height="5" fill="#F6F1E3" /><rect x="1014" y="627" width="12" height="1" fill="#000000" /><rect x="1025" y="623" width="1" height="5" fill="#000000" /><rect x="1015" y="626" width="10" height="1" fill="#C6A95E" /><rect x="1024" y="624" width="1" height="3" fill="#C6A95E" />
<rect x="1014" y="689" width="12" height="12" fill="#E3D6B0" /><rect x="1014" y="689" width="12" height="1" fill="#F6F1E3" /><rect x="1014" y="689" width="1" height="12" fill="#F6F1E3" /><rect x="1014" y="700" width="12" height="1" fill="#000000" /><rect x="1025" y="689" width="1" height="12" fill="#000000" /><rect x="1015" y="699" width="10" height="1" fill="#C6A95E" /><rect x="1024" y="690" width="1" height="10" fill="#C6A95E" />
<path d="M1016.5,693 L1023.5,693 L1020.0,697 Z" fill="#000"/>
<rect x="250" y="703" width="585" height="12" fill="#0000FF" />
<text transform="translate(640,714) scale(0.8929,1)" x="0" y="0" fill="#FFFF00" text-anchor="middle" font-size="11.76" font-weight="normal" letter-spacing="1">75%</text>
<rect x="250" y="717" width="642" height="17" fill="#E3D6B0" /><rect x="250" y="717" width="642" height="1" fill="#C6A95E" /><rect x="250" y="717" width="1" height="17" fill="#C6A95E" /><rect x="250" y="733" width="642" height="1" fill="#F6F1E3" /><rect x="891" y="717" width="1" height="17" fill="#F6F1E3" />
<rect x="894" y="717" width="150" height="17" fill="#E3D6B0" /><rect x="894" y="717" width="150" height="1" fill="#C6A95E" /><rect x="894" y="717" width="1" height="17" fill="#C6A95E" /><rect x="894" y="733" width="150" height="1" fill="#F6F1E3" /><rect x="1043" y="717" width="1" height="17" fill="#F6F1E3" />
<text transform="translate(573,730) scale(0.8929,1)" x="0" y="0" fill="#000" text-anchor="middle" font-size="14.56" font-weight="normal" >110 - C:\Programme\WsWin\HTML\2007\20070501.htm - 103128 Bytes</text>
<text transform="translate(961,730) scale(0.8929,1)" x="0" y="0" fill="#000" text-anchor="middle" font-size="14.00" font-weight="normal" >25,70 kB/s</text>
<rect x="564" y="380" width="169" height="33" fill="#E3D6B0" /><rect x="564" y="380" width="169" height="1" fill="#F6F1E3" /><rect x="564" y="380" width="1" height="33" fill="#F6F1E3" /><rect x="564" y="412" width="169" height="1" fill="#000000" /><rect x="732" y="380" width="1" height="33" fill="#000000" /><rect x="565" y="411" width="167" height="1" fill="#C6A95E" /><rect x="731" y="381" width="1" height="31" fill="#C6A95E" />
<rect x="565" y="381" width="1" height="31" fill="#F6F1E3"/>
<text x="576" y="402" font-size="13" font-weight="bold" font-style="italic" fill="#FF0000">Übertragung abbrechen</text>
<rect x="656" y="404" width="8" height="1" fill="#FF0000" /></g>
<g><rect x="0" y="794" width="1024" height="1" fill="#F4ECD8" />
<rect x="0" y="795" width="1024" height="68" fill="#006EDC" />
<rect x="0" y="795" width="1" height="68" fill="#E8C878" />
<rect x="87" y="795" width="2" height="68" fill="#E8C878" />
<rect x="204" y="795" width="2" height="68" fill="#E8C878" />
<rect x="322" y="795" width="2" height="68" fill="#E8C878" />
<rect x="440" y="795" width="2" height="68" fill="#E8C878" />
<rect x="558" y="795" width="2" height="68" fill="#E8C878" />
<rect x="677" y="795" width="2" height="68" fill="#E8C878" />
<rect x="794" y="795" width="2" height="68" fill="#E8C878" />
<rect x="912" y="795" width="2" height="68" fill="#E8C878" />
<rect x="1022" y="795" width="2" height="68" fill="#E8C878" />
<text x="8" y="813" fill="#000" text-anchor="start" font-size="11.6" font-weight="bold" >Sensor</text>
<text x="8" y="829" fill="#000" text-anchor="start" font-size="11.6" font-weight="bold" >MinWert</text>
<text x="8" y="845" fill="#000" text-anchor="start" font-size="11.6" font-weight="bold" >MaxWert</text>
<text x="8" y="861" fill="#000" text-anchor="start" font-size="11.6" font-weight="bold" >Durchschnitt</text>
<text x="95" y="813" fill="#000" text-anchor="start" font-size="12" font-weight="bold" >Temp. A.</text>
<text x="199" y="813" fill="#000" text-anchor="end" font-size="12" font-weight="bold" >°C</text>
<text transform="translate(101,829) scale(0.8929,1)" x="0" y="0" fill="#000" text-anchor="start" font-size="12.32" font-weight="normal" >22:10</text>
<text transform="translate(199,829) scale(0.8929,1)" x="0" y="0" fill="#000" text-anchor="end" font-size="12.32" font-weight="normal" >-3.0</text>
<text transform="translate(101,845) scale(0.8929,1)" x="0" y="0" fill="#000" text-anchor="start" font-size="12.32" font-weight="normal" >00:20</text>
<text transform="translate(199,845) scale(0.8929,1)" x="0" y="0" fill="#000" text-anchor="end" font-size="12.32" font-weight="normal" >1.8</text>
<text transform="translate(101,861) scale(0.8929,1)" x="0" y="0" fill="#000" text-anchor="start" font-size="12.32" font-weight="normal" ></text>
<text transform="translate(199,861) scale(0.8929,1)" x="0" y="0" fill="#000" text-anchor="end" font-size="12.32" font-weight="normal" >-1.26</text>
<text x="212" y="813" fill="#000" text-anchor="start" font-size="12" font-weight="bold" >Feuchte A.</text>
<text x="317" y="813" fill="#000" text-anchor="end" font-size="12" font-weight="bold" >%</text>
<text transform="translate(218,829) scale(0.8929,1)" x="0" y="0" fill="#000" text-anchor="start" font-size="12.32" font-weight="normal" >13:55</text>
<text transform="translate(317,829) scale(0.8929,1)" x="0" y="0" fill="#000" text-anchor="end" font-size="12.32" font-weight="normal" >87</text>
<text transform="translate(218,845) scale(0.8929,1)" x="0" y="0" fill="#000" text-anchor="start" font-size="12.32" font-weight="normal" >04:20</text>
<text transform="translate(317,845) scale(0.8929,1)" x="0" y="0" fill="#000" text-anchor="end" font-size="12.32" font-weight="normal" >95</text>
<text transform="translate(218,861) scale(0.8929,1)" x="0" y="0" fill="#000" text-anchor="start" font-size="12.32" font-weight="normal" ></text>
<text transform="translate(317,861) scale(0.8929,1)" x="0" y="0" fill="#000" text-anchor="end" font-size="12.32" font-weight="normal" >92</text>
<text x="330" y="813" fill="#000" text-anchor="start" font-size="12" font-weight="bold" >Luftdruck</text>
<text x="435" y="813" fill="#000" text-anchor="end" font-size="12" font-weight="bold" >hPa</text>
<text transform="translate(336,829) scale(0.8929,1)" x="0" y="0" fill="#000" text-anchor="start" font-size="12.32" font-weight="normal" >00:05</text>
<text transform="translate(435,829) scale(0.8929,1)" x="0" y="0" fill="#000" text-anchor="end" font-size="12.32" font-weight="normal" >1005.9</text>
<text transform="translate(336,845) scale(0.8929,1)" x="0" y="0" fill="#000" text-anchor="start" font-size="12.32" font-weight="normal" >21:35</text>
<text transform="translate(435,845) scale(0.8929,1)" x="0" y="0" fill="#000" text-anchor="end" font-size="12.32" font-weight="normal" >1010.0</text>
<text transform="translate(330,861) scale(0.8929,1)" x="0" y="0" fill="#000" text-anchor="start" font-size="12.32" font-weight="normal" >^0.8hPa/h</text>
<text transform="translate(435,861) scale(0.8929,1)" x="0" y="0" fill="#000" text-anchor="end" font-size="12.32" font-weight="normal" >1007.6</text>
<text x="448" y="813" fill="#000" text-anchor="start" font-size="12" font-weight="bold" >Wind</text>
<text x="553" y="813" fill="#000" text-anchor="end" font-size="12" font-weight="bold" >km/h</text>
<text transform="translate(448,829) scale(0.8929,1)" x="0" y="0" fill="#000" text-anchor="start" font-size="12.32" font-weight="normal" >Ø 10 min.</text>
<text transform="translate(553,829) scale(0.8929,1)" x="0" y="0" fill="#000" text-anchor="end" font-size="12.32" font-weight="normal" >2.0</text>
<text transform="translate(454,845) scale(0.8929,1)" x="0" y="0" fill="#000" text-anchor="start" font-size="12.32" font-weight="normal" >14:10</text>
<text transform="translate(553,845) scale(0.8929,1)" x="0" y="0" fill="#000" text-anchor="end" font-size="12.32" font-weight="normal" >0-NO 21.8</text>
<text transform="translate(454,861) scale(0.8929,1)" x="0" y="0" fill="#000" text-anchor="start" font-size="12.32" font-weight="normal" >9.3 km</text>
<text transform="translate(553,861) scale(0.8929,1)" x="0" y="0" fill="#000" text-anchor="end" font-size="12.32" font-weight="normal" >6.7</text>
<text x="566" y="813" fill="#000" text-anchor="start" font-size="12" font-weight="bold" >Windböen</text>
<text x="672" y="813" fill="#000" text-anchor="end" font-size="12" font-weight="bold" >km/h</text>
<text transform="translate(566,829) scale(0.8929,1)" x="0" y="0" fill="#000" text-anchor="start" font-size="12.32" font-weight="normal" >Ø 10 min.</text>
<text transform="translate(672,829) scale(0.8929,1)" x="0" y="0" fill="#000" text-anchor="end" font-size="12.32" font-weight="normal" >2.0</text>
<text transform="translate(572,845) scale(0.8929,1)" x="0" y="0" fill="#000" text-anchor="start" font-size="12.32" font-weight="normal" >14:10</text>
<text transform="translate(672,845) scale(0.8929,1)" x="0" y="0" fill="#000" text-anchor="end" font-size="12.32" font-weight="normal" >0-NO 32.9</text>
<text transform="translate(572,861) scale(0.8929,1)" x="0" y="0" fill="#000" text-anchor="start" font-size="12.32" font-weight="normal" >9.3 km</text>
<text transform="translate(672,861) scale(0.8929,1)" x="0" y="0" fill="#000" text-anchor="end" font-size="12.32" font-weight="normal" >9.3</text>
<text x="685" y="813" fill="#000" text-anchor="start" font-size="12" font-weight="bold" >Richtung</text>
<text x="789" y="813" fill="#000" text-anchor="end" font-size="12" font-weight="bold" ></text>
<text transform="translate(691,829) scale(0.8929,1)" x="0" y="0" fill="#000" text-anchor="start" font-size="12.32" font-weight="normal" >02:20</text>
<text transform="translate(789,829) scale(0.8929,1)" x="0" y="0" fill="#000" text-anchor="end" font-size="12.32" font-weight="normal" >N-NO</text>
<text transform="translate(691,845) scale(0.8929,1)" x="0" y="0" fill="#000" text-anchor="start" font-size="12.32" font-weight="normal" >01:55</text>
<text transform="translate(789,845) scale(0.8929,1)" x="0" y="0" fill="#000" text-anchor="end" font-size="12.32" font-weight="normal" >N-NW</text>
<text transform="translate(691,861) scale(0.8929,1)" x="0" y="0" fill="#000" text-anchor="start" font-size="12.32" font-weight="normal" ></text>
<text transform="translate(789,861) scale(0.8929,1)" x="0" y="0" fill="#000" text-anchor="end" font-size="12.32" font-weight="normal" >0-NO</text>
<text x="802" y="813" fill="#000" text-anchor="start" font-size="12" font-weight="bold" >Regen</text>
<text x="907" y="813" fill="#000" text-anchor="end" font-size="12" font-weight="bold" >l/m²</text>
<text transform="translate(802,829) scale(0.8929,1)" x="0" y="0" fill="#000" text-anchor="start" font-size="12.32" font-weight="normal" >15 min.</text>
<text transform="translate(907,829) scale(0.8929,1)" x="0" y="0" fill="#000" text-anchor="end" font-size="12.32" font-weight="normal" ></text>
<text transform="translate(808,845) scale(0.8929,1)" x="0" y="0" fill="#000" text-anchor="start" font-size="12.32" font-weight="normal" >12:25</text>
<text transform="translate(907,845) scale(0.8929,1)" x="0" y="0" fill="#000" text-anchor="end" font-size="12.32" font-weight="normal" >0.5</text>
<text transform="translate(802,861) scale(0.8929,1)" x="0" y="0" fill="#000" text-anchor="start" font-size="12.32" font-weight="normal" >Gesamt:</text>
<text transform="translate(907,861) scale(0.8929,1)" x="0" y="0" fill="#000" text-anchor="end" font-size="12.32" font-weight="normal" >1.6</text>
<text transform="translate(921,813) scale(0.8929,1)" x="0" y="0" fill="#000" text-anchor="start" font-size="11.87" font-weight="normal" >Virtual Temp</text>
<text transform="translate(1022,813) scale(0.8929,1)" x="0" y="0" fill="#000" text-anchor="end" font-size="11.87" font-weight="normal" >-2.4°C</text>
<text transform="translate(921,829) scale(0.8929,1)" x="0" y="0" fill="#000" text-anchor="start" font-size="11.87" font-weight="normal" >Regen/Tag</text>
<text transform="translate(1022,829) scale(0.8929,1)" x="0" y="0" fill="#000" text-anchor="end" font-size="11.87" font-weight="normal" >1.6l/m²</text>
<text transform="translate(921,845) scale(0.8929,1)" x="0" y="0" fill="#000" text-anchor="start" font-size="11.87" font-weight="normal" >Neumond</text>
<text transform="translate(1022,845) scale(0.8929,1)" x="0" y="0" fill="#000" text-anchor="end" font-size="11.87" font-weight="normal" >17.02.07</text>
<text transform="translate(921,861) scale(0.8929,1)" x="0" y="0" fill="#000" text-anchor="start" font-size="11.87" font-weight="normal" >Vollmond</text>
<text transform="translate(1022,861) scale(0.8929,1)" x="0" y="0" fill="#000" text-anchor="end" font-size="11.87" font-weight="normal" >04.03.07</text></g>
</svg>
</body></html>
